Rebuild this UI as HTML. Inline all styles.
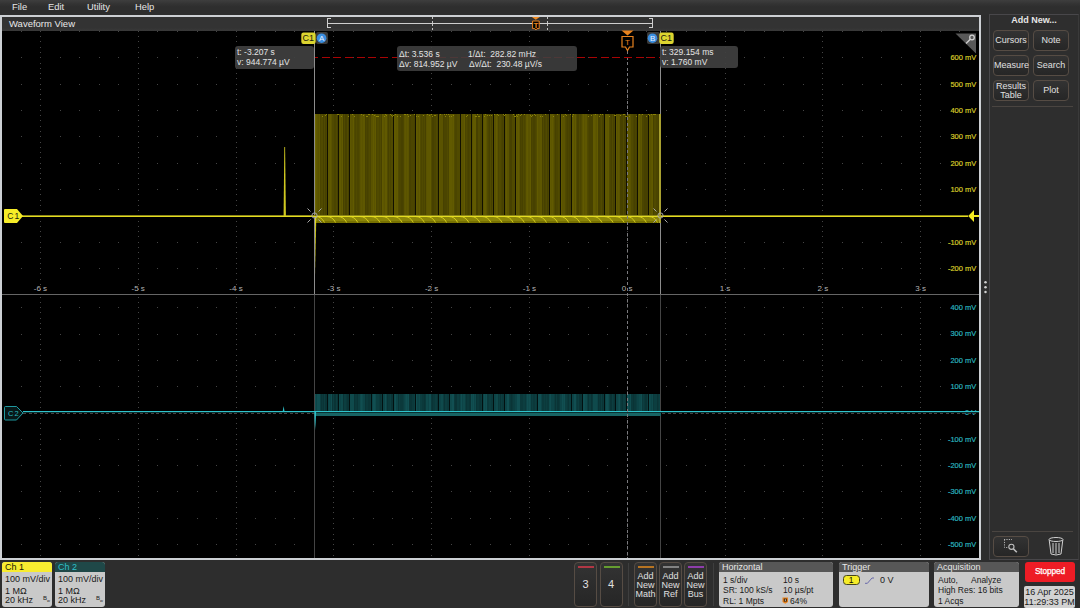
<!DOCTYPE html><html><head><meta charset="utf-8"><style>
*{margin:0;padding:0;box-sizing:border-box}
html,body{width:1080px;height:608px;overflow:hidden;background:#2d2d2d;font-family:"Liberation Sans", sans-serif;}
.a{position:absolute;white-space:nowrap}
.menu{color:#e6e6e6;font-size:9.4px;top:-0.3px;}
.btn{position:absolute;background:linear-gradient(#333,#262626);border:1px solid #564c44;border-radius:4px;color:#e0e0e0;font-size:9px;text-align:center;}
.box{position:absolute;background:#c9c9c9;border-radius:2px;overflow:hidden}
.hdr{position:absolute;left:0;right:0;top:0;height:10px;background:#575757;color:#e8e8e8;font-size:9px;padding-left:3px;line-height:10px}
.bt{position:absolute;color:#1a1a1a;font-size:9px;line-height:10px}
.ro{position:absolute;background:rgba(64,64,64,0.92);border-radius:3px;color:#e4e4e4;font-size:8.5px;line-height:9.5px}
</style></head><body>

<div class="a" style="left:0;top:0;width:1080px;height:15px;background:linear-gradient(#3e3e3e 0px,#333 4px,#2e2e2e 7px,#2e2e2e 15px)"></div>
<div class="a menu" style="left:12px;line-height:13px">File</div>
<div class="a menu" style="left:48px;line-height:13px">Edit</div>
<div class="a menu" style="left:87px;line-height:13px">Utility</div>
<div class="a menu" style="left:135px;line-height:13px">Help</div>
<div class="a" style="left:0;top:15px;width:981px;height:545px;border:2px solid #cdd0d4;background:#000"></div>
<div class="a" style="left:2px;top:17px;width:977px;height:14px;background:linear-gradient(#333 0,#333 11px,#3a3a3a 14px)"></div>
<div class="a" style="left:9px;top:17px;color:#e8e8e8;font-size:9.5px;line-height:14px">Waveform View</div>
<svg class="a" style="left:0;top:0" width="1080" height="608" viewBox="0 0 1080 608" shape-rendering="crispEdges">
<g stroke="#cfcfcf" fill="none" stroke-width="1">
<path d="M331,18.5 H327.5 V27.5 H331"/><path d="M649,18.5 H652.5 V27.5 H649"/>
<line x1="328" y1="23.5" x2="652" y2="23.5"/>
</g>
<g stroke="#c4c4c4" stroke-width="1" stroke-dasharray="2,1.5"><line x1="432.5" y1="17" x2="432.5" y2="30"/><line x1="547.5" y1="17" x2="547.5" y2="30"/></g>
<g shape-rendering="geometricPrecision"><path d="M531.8,17 H539.8 L535.8,19.8 Z" fill="#f08a20"/><path d="M532.6,21 H539.2 V28.6 H537 L535.9,30 L534.8,28.6 H532.6 Z" fill="#000" stroke="#e8821e" stroke-width="1"/></g>
<text x="535.9" y="27.8" font-size="8" font-weight="bold" fill="#e8821e" text-anchor="middle" font-family="Liberation Sans">T</text>
<g fill="#454545" shape-rendering="crispEdges">
<rect x="21" y="31" width="1" height="1"/>
<rect x="40" y="31" width="1" height="1"/>
<rect x="60" y="31" width="1" height="1"/>
<rect x="79" y="31" width="1" height="1"/>
<rect x="99" y="31" width="1" height="1"/>
<rect x="118" y="31" width="1" height="1"/>
<rect x="138" y="31" width="1" height="1"/>
<rect x="157" y="31" width="1" height="1"/>
<rect x="177" y="31" width="1" height="1"/>
<rect x="197" y="31" width="1" height="1"/>
<rect x="216" y="31" width="1" height="1"/>
<rect x="236" y="31" width="1" height="1"/>
<rect x="255" y="31" width="1" height="1"/>
<rect x="275" y="31" width="1" height="1"/>
<rect x="294" y="31" width="1" height="1"/>
<rect x="314" y="31" width="1" height="1"/>
<rect x="333" y="31" width="1" height="1"/>
<rect x="353" y="31" width="1" height="1"/>
<rect x="373" y="31" width="1" height="1"/>
<rect x="392" y="31" width="1" height="1"/>
<rect x="412" y="31" width="1" height="1"/>
<rect x="431" y="31" width="1" height="1"/>
<rect x="451" y="31" width="1" height="1"/>
<rect x="470" y="31" width="1" height="1"/>
<rect x="490" y="31" width="1" height="1"/>
<rect x="510" y="31" width="1" height="1"/>
<rect x="529" y="31" width="1" height="1"/>
<rect x="549" y="31" width="1" height="1"/>
<rect x="568" y="31" width="1" height="1"/>
<rect x="588" y="31" width="1" height="1"/>
<rect x="607" y="31" width="1" height="1"/>
<rect x="627" y="31" width="1" height="1"/>
<rect x="646" y="31" width="1" height="1"/>
<rect x="666" y="31" width="1" height="1"/>
<rect x="686" y="31" width="1" height="1"/>
<rect x="705" y="31" width="1" height="1"/>
<rect x="725" y="31" width="1" height="1"/>
<rect x="744" y="31" width="1" height="1"/>
<rect x="764" y="31" width="1" height="1"/>
<rect x="783" y="31" width="1" height="1"/>
<rect x="803" y="31" width="1" height="1"/>
<rect x="822" y="31" width="1" height="1"/>
<rect x="842" y="31" width="1" height="1"/>
<rect x="862" y="31" width="1" height="1"/>
<rect x="881" y="31" width="1" height="1"/>
<rect x="901" y="31" width="1" height="1"/>
<rect x="920" y="31" width="1" height="1"/>
<rect x="940" y="31" width="1" height="1"/>
<rect x="959" y="31" width="1" height="1"/>
<rect x="21" y="57" width="1" height="1"/>
<rect x="40" y="57" width="1" height="1"/>
<rect x="60" y="57" width="1" height="1"/>
<rect x="79" y="57" width="1" height="1"/>
<rect x="99" y="57" width="1" height="1"/>
<rect x="118" y="57" width="1" height="1"/>
<rect x="138" y="57" width="1" height="1"/>
<rect x="157" y="57" width="1" height="1"/>
<rect x="177" y="57" width="1" height="1"/>
<rect x="197" y="57" width="1" height="1"/>
<rect x="216" y="57" width="1" height="1"/>
<rect x="236" y="57" width="1" height="1"/>
<rect x="255" y="57" width="1" height="1"/>
<rect x="275" y="57" width="1" height="1"/>
<rect x="294" y="57" width="1" height="1"/>
<rect x="314" y="57" width="1" height="1"/>
<rect x="333" y="57" width="1" height="1"/>
<rect x="353" y="57" width="1" height="1"/>
<rect x="373" y="57" width="1" height="1"/>
<rect x="392" y="57" width="1" height="1"/>
<rect x="412" y="57" width="1" height="1"/>
<rect x="431" y="57" width="1" height="1"/>
<rect x="451" y="57" width="1" height="1"/>
<rect x="470" y="57" width="1" height="1"/>
<rect x="490" y="57" width="1" height="1"/>
<rect x="510" y="57" width="1" height="1"/>
<rect x="529" y="57" width="1" height="1"/>
<rect x="549" y="57" width="1" height="1"/>
<rect x="568" y="57" width="1" height="1"/>
<rect x="588" y="57" width="1" height="1"/>
<rect x="607" y="57" width="1" height="1"/>
<rect x="627" y="57" width="1" height="1"/>
<rect x="646" y="57" width="1" height="1"/>
<rect x="666" y="57" width="1" height="1"/>
<rect x="686" y="57" width="1" height="1"/>
<rect x="705" y="57" width="1" height="1"/>
<rect x="725" y="57" width="1" height="1"/>
<rect x="744" y="57" width="1" height="1"/>
<rect x="764" y="57" width="1" height="1"/>
<rect x="783" y="57" width="1" height="1"/>
<rect x="803" y="57" width="1" height="1"/>
<rect x="822" y="57" width="1" height="1"/>
<rect x="842" y="57" width="1" height="1"/>
<rect x="862" y="57" width="1" height="1"/>
<rect x="881" y="57" width="1" height="1"/>
<rect x="901" y="57" width="1" height="1"/>
<rect x="920" y="57" width="1" height="1"/>
<rect x="940" y="57" width="1" height="1"/>
<rect x="959" y="57" width="1" height="1"/>
<rect x="21" y="84" width="1" height="1"/>
<rect x="40" y="84" width="1" height="1"/>
<rect x="60" y="84" width="1" height="1"/>
<rect x="79" y="84" width="1" height="1"/>
<rect x="99" y="84" width="1" height="1"/>
<rect x="118" y="84" width="1" height="1"/>
<rect x="138" y="84" width="1" height="1"/>
<rect x="157" y="84" width="1" height="1"/>
<rect x="177" y="84" width="1" height="1"/>
<rect x="197" y="84" width="1" height="1"/>
<rect x="216" y="84" width="1" height="1"/>
<rect x="236" y="84" width="1" height="1"/>
<rect x="255" y="84" width="1" height="1"/>
<rect x="275" y="84" width="1" height="1"/>
<rect x="294" y="84" width="1" height="1"/>
<rect x="314" y="84" width="1" height="1"/>
<rect x="333" y="84" width="1" height="1"/>
<rect x="353" y="84" width="1" height="1"/>
<rect x="373" y="84" width="1" height="1"/>
<rect x="392" y="84" width="1" height="1"/>
<rect x="412" y="84" width="1" height="1"/>
<rect x="431" y="84" width="1" height="1"/>
<rect x="451" y="84" width="1" height="1"/>
<rect x="470" y="84" width="1" height="1"/>
<rect x="490" y="84" width="1" height="1"/>
<rect x="510" y="84" width="1" height="1"/>
<rect x="529" y="84" width="1" height="1"/>
<rect x="549" y="84" width="1" height="1"/>
<rect x="568" y="84" width="1" height="1"/>
<rect x="588" y="84" width="1" height="1"/>
<rect x="607" y="84" width="1" height="1"/>
<rect x="627" y="84" width="1" height="1"/>
<rect x="646" y="84" width="1" height="1"/>
<rect x="666" y="84" width="1" height="1"/>
<rect x="686" y="84" width="1" height="1"/>
<rect x="705" y="84" width="1" height="1"/>
<rect x="725" y="84" width="1" height="1"/>
<rect x="744" y="84" width="1" height="1"/>
<rect x="764" y="84" width="1" height="1"/>
<rect x="783" y="84" width="1" height="1"/>
<rect x="803" y="84" width="1" height="1"/>
<rect x="822" y="84" width="1" height="1"/>
<rect x="842" y="84" width="1" height="1"/>
<rect x="862" y="84" width="1" height="1"/>
<rect x="881" y="84" width="1" height="1"/>
<rect x="901" y="84" width="1" height="1"/>
<rect x="920" y="84" width="1" height="1"/>
<rect x="940" y="84" width="1" height="1"/>
<rect x="959" y="84" width="1" height="1"/>
<rect x="21" y="110" width="1" height="1"/>
<rect x="40" y="110" width="1" height="1"/>
<rect x="60" y="110" width="1" height="1"/>
<rect x="79" y="110" width="1" height="1"/>
<rect x="99" y="110" width="1" height="1"/>
<rect x="118" y="110" width="1" height="1"/>
<rect x="138" y="110" width="1" height="1"/>
<rect x="157" y="110" width="1" height="1"/>
<rect x="177" y="110" width="1" height="1"/>
<rect x="197" y="110" width="1" height="1"/>
<rect x="216" y="110" width="1" height="1"/>
<rect x="236" y="110" width="1" height="1"/>
<rect x="255" y="110" width="1" height="1"/>
<rect x="275" y="110" width="1" height="1"/>
<rect x="294" y="110" width="1" height="1"/>
<rect x="314" y="110" width="1" height="1"/>
<rect x="333" y="110" width="1" height="1"/>
<rect x="353" y="110" width="1" height="1"/>
<rect x="373" y="110" width="1" height="1"/>
<rect x="392" y="110" width="1" height="1"/>
<rect x="412" y="110" width="1" height="1"/>
<rect x="431" y="110" width="1" height="1"/>
<rect x="451" y="110" width="1" height="1"/>
<rect x="470" y="110" width="1" height="1"/>
<rect x="490" y="110" width="1" height="1"/>
<rect x="510" y="110" width="1" height="1"/>
<rect x="529" y="110" width="1" height="1"/>
<rect x="549" y="110" width="1" height="1"/>
<rect x="568" y="110" width="1" height="1"/>
<rect x="588" y="110" width="1" height="1"/>
<rect x="607" y="110" width="1" height="1"/>
<rect x="627" y="110" width="1" height="1"/>
<rect x="646" y="110" width="1" height="1"/>
<rect x="666" y="110" width="1" height="1"/>
<rect x="686" y="110" width="1" height="1"/>
<rect x="705" y="110" width="1" height="1"/>
<rect x="725" y="110" width="1" height="1"/>
<rect x="744" y="110" width="1" height="1"/>
<rect x="764" y="110" width="1" height="1"/>
<rect x="783" y="110" width="1" height="1"/>
<rect x="803" y="110" width="1" height="1"/>
<rect x="822" y="110" width="1" height="1"/>
<rect x="842" y="110" width="1" height="1"/>
<rect x="862" y="110" width="1" height="1"/>
<rect x="881" y="110" width="1" height="1"/>
<rect x="901" y="110" width="1" height="1"/>
<rect x="920" y="110" width="1" height="1"/>
<rect x="940" y="110" width="1" height="1"/>
<rect x="959" y="110" width="1" height="1"/>
<rect x="21" y="136" width="1" height="1"/>
<rect x="40" y="136" width="1" height="1"/>
<rect x="60" y="136" width="1" height="1"/>
<rect x="79" y="136" width="1" height="1"/>
<rect x="99" y="136" width="1" height="1"/>
<rect x="118" y="136" width="1" height="1"/>
<rect x="138" y="136" width="1" height="1"/>
<rect x="157" y="136" width="1" height="1"/>
<rect x="177" y="136" width="1" height="1"/>
<rect x="197" y="136" width="1" height="1"/>
<rect x="216" y="136" width="1" height="1"/>
<rect x="236" y="136" width="1" height="1"/>
<rect x="255" y="136" width="1" height="1"/>
<rect x="275" y="136" width="1" height="1"/>
<rect x="294" y="136" width="1" height="1"/>
<rect x="314" y="136" width="1" height="1"/>
<rect x="333" y="136" width="1" height="1"/>
<rect x="353" y="136" width="1" height="1"/>
<rect x="373" y="136" width="1" height="1"/>
<rect x="392" y="136" width="1" height="1"/>
<rect x="412" y="136" width="1" height="1"/>
<rect x="431" y="136" width="1" height="1"/>
<rect x="451" y="136" width="1" height="1"/>
<rect x="470" y="136" width="1" height="1"/>
<rect x="490" y="136" width="1" height="1"/>
<rect x="510" y="136" width="1" height="1"/>
<rect x="529" y="136" width="1" height="1"/>
<rect x="549" y="136" width="1" height="1"/>
<rect x="568" y="136" width="1" height="1"/>
<rect x="588" y="136" width="1" height="1"/>
<rect x="607" y="136" width="1" height="1"/>
<rect x="627" y="136" width="1" height="1"/>
<rect x="646" y="136" width="1" height="1"/>
<rect x="666" y="136" width="1" height="1"/>
<rect x="686" y="136" width="1" height="1"/>
<rect x="705" y="136" width="1" height="1"/>
<rect x="725" y="136" width="1" height="1"/>
<rect x="744" y="136" width="1" height="1"/>
<rect x="764" y="136" width="1" height="1"/>
<rect x="783" y="136" width="1" height="1"/>
<rect x="803" y="136" width="1" height="1"/>
<rect x="822" y="136" width="1" height="1"/>
<rect x="842" y="136" width="1" height="1"/>
<rect x="862" y="136" width="1" height="1"/>
<rect x="881" y="136" width="1" height="1"/>
<rect x="901" y="136" width="1" height="1"/>
<rect x="920" y="136" width="1" height="1"/>
<rect x="940" y="136" width="1" height="1"/>
<rect x="959" y="136" width="1" height="1"/>
<rect x="21" y="163" width="1" height="1"/>
<rect x="40" y="163" width="1" height="1"/>
<rect x="60" y="163" width="1" height="1"/>
<rect x="79" y="163" width="1" height="1"/>
<rect x="99" y="163" width="1" height="1"/>
<rect x="118" y="163" width="1" height="1"/>
<rect x="138" y="163" width="1" height="1"/>
<rect x="157" y="163" width="1" height="1"/>
<rect x="177" y="163" width="1" height="1"/>
<rect x="197" y="163" width="1" height="1"/>
<rect x="216" y="163" width="1" height="1"/>
<rect x="236" y="163" width="1" height="1"/>
<rect x="255" y="163" width="1" height="1"/>
<rect x="275" y="163" width="1" height="1"/>
<rect x="294" y="163" width="1" height="1"/>
<rect x="314" y="163" width="1" height="1"/>
<rect x="333" y="163" width="1" height="1"/>
<rect x="353" y="163" width="1" height="1"/>
<rect x="373" y="163" width="1" height="1"/>
<rect x="392" y="163" width="1" height="1"/>
<rect x="412" y="163" width="1" height="1"/>
<rect x="431" y="163" width="1" height="1"/>
<rect x="451" y="163" width="1" height="1"/>
<rect x="470" y="163" width="1" height="1"/>
<rect x="490" y="163" width="1" height="1"/>
<rect x="510" y="163" width="1" height="1"/>
<rect x="529" y="163" width="1" height="1"/>
<rect x="549" y="163" width="1" height="1"/>
<rect x="568" y="163" width="1" height="1"/>
<rect x="588" y="163" width="1" height="1"/>
<rect x="607" y="163" width="1" height="1"/>
<rect x="627" y="163" width="1" height="1"/>
<rect x="646" y="163" width="1" height="1"/>
<rect x="666" y="163" width="1" height="1"/>
<rect x="686" y="163" width="1" height="1"/>
<rect x="705" y="163" width="1" height="1"/>
<rect x="725" y="163" width="1" height="1"/>
<rect x="744" y="163" width="1" height="1"/>
<rect x="764" y="163" width="1" height="1"/>
<rect x="783" y="163" width="1" height="1"/>
<rect x="803" y="163" width="1" height="1"/>
<rect x="822" y="163" width="1" height="1"/>
<rect x="842" y="163" width="1" height="1"/>
<rect x="862" y="163" width="1" height="1"/>
<rect x="881" y="163" width="1" height="1"/>
<rect x="901" y="163" width="1" height="1"/>
<rect x="920" y="163" width="1" height="1"/>
<rect x="940" y="163" width="1" height="1"/>
<rect x="959" y="163" width="1" height="1"/>
<rect x="21" y="189" width="1" height="1"/>
<rect x="40" y="189" width="1" height="1"/>
<rect x="60" y="189" width="1" height="1"/>
<rect x="79" y="189" width="1" height="1"/>
<rect x="99" y="189" width="1" height="1"/>
<rect x="118" y="189" width="1" height="1"/>
<rect x="138" y="189" width="1" height="1"/>
<rect x="157" y="189" width="1" height="1"/>
<rect x="177" y="189" width="1" height="1"/>
<rect x="197" y="189" width="1" height="1"/>
<rect x="216" y="189" width="1" height="1"/>
<rect x="236" y="189" width="1" height="1"/>
<rect x="255" y="189" width="1" height="1"/>
<rect x="275" y="189" width="1" height="1"/>
<rect x="294" y="189" width="1" height="1"/>
<rect x="314" y="189" width="1" height="1"/>
<rect x="333" y="189" width="1" height="1"/>
<rect x="353" y="189" width="1" height="1"/>
<rect x="373" y="189" width="1" height="1"/>
<rect x="392" y="189" width="1" height="1"/>
<rect x="412" y="189" width="1" height="1"/>
<rect x="431" y="189" width="1" height="1"/>
<rect x="451" y="189" width="1" height="1"/>
<rect x="470" y="189" width="1" height="1"/>
<rect x="490" y="189" width="1" height="1"/>
<rect x="510" y="189" width="1" height="1"/>
<rect x="529" y="189" width="1" height="1"/>
<rect x="549" y="189" width="1" height="1"/>
<rect x="568" y="189" width="1" height="1"/>
<rect x="588" y="189" width="1" height="1"/>
<rect x="607" y="189" width="1" height="1"/>
<rect x="627" y="189" width="1" height="1"/>
<rect x="646" y="189" width="1" height="1"/>
<rect x="666" y="189" width="1" height="1"/>
<rect x="686" y="189" width="1" height="1"/>
<rect x="705" y="189" width="1" height="1"/>
<rect x="725" y="189" width="1" height="1"/>
<rect x="744" y="189" width="1" height="1"/>
<rect x="764" y="189" width="1" height="1"/>
<rect x="783" y="189" width="1" height="1"/>
<rect x="803" y="189" width="1" height="1"/>
<rect x="822" y="189" width="1" height="1"/>
<rect x="842" y="189" width="1" height="1"/>
<rect x="862" y="189" width="1" height="1"/>
<rect x="881" y="189" width="1" height="1"/>
<rect x="901" y="189" width="1" height="1"/>
<rect x="920" y="189" width="1" height="1"/>
<rect x="940" y="189" width="1" height="1"/>
<rect x="959" y="189" width="1" height="1"/>
<rect x="21" y="215" width="1" height="1"/>
<rect x="40" y="215" width="1" height="1"/>
<rect x="60" y="215" width="1" height="1"/>
<rect x="79" y="215" width="1" height="1"/>
<rect x="99" y="215" width="1" height="1"/>
<rect x="118" y="215" width="1" height="1"/>
<rect x="138" y="215" width="1" height="1"/>
<rect x="157" y="215" width="1" height="1"/>
<rect x="177" y="215" width="1" height="1"/>
<rect x="197" y="215" width="1" height="1"/>
<rect x="216" y="215" width="1" height="1"/>
<rect x="236" y="215" width="1" height="1"/>
<rect x="255" y="215" width="1" height="1"/>
<rect x="275" y="215" width="1" height="1"/>
<rect x="294" y="215" width="1" height="1"/>
<rect x="314" y="215" width="1" height="1"/>
<rect x="333" y="215" width="1" height="1"/>
<rect x="353" y="215" width="1" height="1"/>
<rect x="373" y="215" width="1" height="1"/>
<rect x="392" y="215" width="1" height="1"/>
<rect x="412" y="215" width="1" height="1"/>
<rect x="431" y="215" width="1" height="1"/>
<rect x="451" y="215" width="1" height="1"/>
<rect x="470" y="215" width="1" height="1"/>
<rect x="490" y="215" width="1" height="1"/>
<rect x="510" y="215" width="1" height="1"/>
<rect x="529" y="215" width="1" height="1"/>
<rect x="549" y="215" width="1" height="1"/>
<rect x="568" y="215" width="1" height="1"/>
<rect x="588" y="215" width="1" height="1"/>
<rect x="607" y="215" width="1" height="1"/>
<rect x="627" y="215" width="1" height="1"/>
<rect x="646" y="215" width="1" height="1"/>
<rect x="666" y="215" width="1" height="1"/>
<rect x="686" y="215" width="1" height="1"/>
<rect x="705" y="215" width="1" height="1"/>
<rect x="725" y="215" width="1" height="1"/>
<rect x="744" y="215" width="1" height="1"/>
<rect x="764" y="215" width="1" height="1"/>
<rect x="783" y="215" width="1" height="1"/>
<rect x="803" y="215" width="1" height="1"/>
<rect x="822" y="215" width="1" height="1"/>
<rect x="842" y="215" width="1" height="1"/>
<rect x="862" y="215" width="1" height="1"/>
<rect x="881" y="215" width="1" height="1"/>
<rect x="901" y="215" width="1" height="1"/>
<rect x="920" y="215" width="1" height="1"/>
<rect x="940" y="215" width="1" height="1"/>
<rect x="959" y="215" width="1" height="1"/>
<rect x="21" y="242" width="1" height="1"/>
<rect x="40" y="242" width="1" height="1"/>
<rect x="60" y="242" width="1" height="1"/>
<rect x="79" y="242" width="1" height="1"/>
<rect x="99" y="242" width="1" height="1"/>
<rect x="118" y="242" width="1" height="1"/>
<rect x="138" y="242" width="1" height="1"/>
<rect x="157" y="242" width="1" height="1"/>
<rect x="177" y="242" width="1" height="1"/>
<rect x="197" y="242" width="1" height="1"/>
<rect x="216" y="242" width="1" height="1"/>
<rect x="236" y="242" width="1" height="1"/>
<rect x="255" y="242" width="1" height="1"/>
<rect x="275" y="242" width="1" height="1"/>
<rect x="294" y="242" width="1" height="1"/>
<rect x="314" y="242" width="1" height="1"/>
<rect x="333" y="242" width="1" height="1"/>
<rect x="353" y="242" width="1" height="1"/>
<rect x="373" y="242" width="1" height="1"/>
<rect x="392" y="242" width="1" height="1"/>
<rect x="412" y="242" width="1" height="1"/>
<rect x="431" y="242" width="1" height="1"/>
<rect x="451" y="242" width="1" height="1"/>
<rect x="470" y="242" width="1" height="1"/>
<rect x="490" y="242" width="1" height="1"/>
<rect x="510" y="242" width="1" height="1"/>
<rect x="529" y="242" width="1" height="1"/>
<rect x="549" y="242" width="1" height="1"/>
<rect x="568" y="242" width="1" height="1"/>
<rect x="588" y="242" width="1" height="1"/>
<rect x="607" y="242" width="1" height="1"/>
<rect x="627" y="242" width="1" height="1"/>
<rect x="646" y="242" width="1" height="1"/>
<rect x="666" y="242" width="1" height="1"/>
<rect x="686" y="242" width="1" height="1"/>
<rect x="705" y="242" width="1" height="1"/>
<rect x="725" y="242" width="1" height="1"/>
<rect x="744" y="242" width="1" height="1"/>
<rect x="764" y="242" width="1" height="1"/>
<rect x="783" y="242" width="1" height="1"/>
<rect x="803" y="242" width="1" height="1"/>
<rect x="822" y="242" width="1" height="1"/>
<rect x="842" y="242" width="1" height="1"/>
<rect x="862" y="242" width="1" height="1"/>
<rect x="881" y="242" width="1" height="1"/>
<rect x="901" y="242" width="1" height="1"/>
<rect x="920" y="242" width="1" height="1"/>
<rect x="940" y="242" width="1" height="1"/>
<rect x="959" y="242" width="1" height="1"/>
<rect x="21" y="268" width="1" height="1"/>
<rect x="40" y="268" width="1" height="1"/>
<rect x="60" y="268" width="1" height="1"/>
<rect x="79" y="268" width="1" height="1"/>
<rect x="99" y="268" width="1" height="1"/>
<rect x="118" y="268" width="1" height="1"/>
<rect x="138" y="268" width="1" height="1"/>
<rect x="157" y="268" width="1" height="1"/>
<rect x="177" y="268" width="1" height="1"/>
<rect x="197" y="268" width="1" height="1"/>
<rect x="216" y="268" width="1" height="1"/>
<rect x="236" y="268" width="1" height="1"/>
<rect x="255" y="268" width="1" height="1"/>
<rect x="275" y="268" width="1" height="1"/>
<rect x="294" y="268" width="1" height="1"/>
<rect x="314" y="268" width="1" height="1"/>
<rect x="333" y="268" width="1" height="1"/>
<rect x="353" y="268" width="1" height="1"/>
<rect x="373" y="268" width="1" height="1"/>
<rect x="392" y="268" width="1" height="1"/>
<rect x="412" y="268" width="1" height="1"/>
<rect x="431" y="268" width="1" height="1"/>
<rect x="451" y="268" width="1" height="1"/>
<rect x="470" y="268" width="1" height="1"/>
<rect x="490" y="268" width="1" height="1"/>
<rect x="510" y="268" width="1" height="1"/>
<rect x="529" y="268" width="1" height="1"/>
<rect x="549" y="268" width="1" height="1"/>
<rect x="568" y="268" width="1" height="1"/>
<rect x="588" y="268" width="1" height="1"/>
<rect x="607" y="268" width="1" height="1"/>
<rect x="627" y="268" width="1" height="1"/>
<rect x="646" y="268" width="1" height="1"/>
<rect x="666" y="268" width="1" height="1"/>
<rect x="686" y="268" width="1" height="1"/>
<rect x="705" y="268" width="1" height="1"/>
<rect x="725" y="268" width="1" height="1"/>
<rect x="744" y="268" width="1" height="1"/>
<rect x="764" y="268" width="1" height="1"/>
<rect x="783" y="268" width="1" height="1"/>
<rect x="803" y="268" width="1" height="1"/>
<rect x="822" y="268" width="1" height="1"/>
<rect x="842" y="268" width="1" height="1"/>
<rect x="862" y="268" width="1" height="1"/>
<rect x="881" y="268" width="1" height="1"/>
<rect x="901" y="268" width="1" height="1"/>
<rect x="920" y="268" width="1" height="1"/>
<rect x="940" y="268" width="1" height="1"/>
<rect x="959" y="268" width="1" height="1"/>
<rect x="21" y="307" width="1" height="1"/>
<rect x="40" y="307" width="1" height="1"/>
<rect x="60" y="307" width="1" height="1"/>
<rect x="79" y="307" width="1" height="1"/>
<rect x="99" y="307" width="1" height="1"/>
<rect x="118" y="307" width="1" height="1"/>
<rect x="138" y="307" width="1" height="1"/>
<rect x="157" y="307" width="1" height="1"/>
<rect x="177" y="307" width="1" height="1"/>
<rect x="197" y="307" width="1" height="1"/>
<rect x="216" y="307" width="1" height="1"/>
<rect x="236" y="307" width="1" height="1"/>
<rect x="255" y="307" width="1" height="1"/>
<rect x="275" y="307" width="1" height="1"/>
<rect x="294" y="307" width="1" height="1"/>
<rect x="314" y="307" width="1" height="1"/>
<rect x="333" y="307" width="1" height="1"/>
<rect x="353" y="307" width="1" height="1"/>
<rect x="373" y="307" width="1" height="1"/>
<rect x="392" y="307" width="1" height="1"/>
<rect x="412" y="307" width="1" height="1"/>
<rect x="431" y="307" width="1" height="1"/>
<rect x="451" y="307" width="1" height="1"/>
<rect x="470" y="307" width="1" height="1"/>
<rect x="490" y="307" width="1" height="1"/>
<rect x="510" y="307" width="1" height="1"/>
<rect x="529" y="307" width="1" height="1"/>
<rect x="549" y="307" width="1" height="1"/>
<rect x="568" y="307" width="1" height="1"/>
<rect x="588" y="307" width="1" height="1"/>
<rect x="607" y="307" width="1" height="1"/>
<rect x="627" y="307" width="1" height="1"/>
<rect x="646" y="307" width="1" height="1"/>
<rect x="666" y="307" width="1" height="1"/>
<rect x="686" y="307" width="1" height="1"/>
<rect x="705" y="307" width="1" height="1"/>
<rect x="725" y="307" width="1" height="1"/>
<rect x="744" y="307" width="1" height="1"/>
<rect x="764" y="307" width="1" height="1"/>
<rect x="783" y="307" width="1" height="1"/>
<rect x="803" y="307" width="1" height="1"/>
<rect x="822" y="307" width="1" height="1"/>
<rect x="842" y="307" width="1" height="1"/>
<rect x="862" y="307" width="1" height="1"/>
<rect x="881" y="307" width="1" height="1"/>
<rect x="901" y="307" width="1" height="1"/>
<rect x="920" y="307" width="1" height="1"/>
<rect x="940" y="307" width="1" height="1"/>
<rect x="959" y="307" width="1" height="1"/>
<rect x="21" y="334" width="1" height="1"/>
<rect x="40" y="334" width="1" height="1"/>
<rect x="60" y="334" width="1" height="1"/>
<rect x="79" y="334" width="1" height="1"/>
<rect x="99" y="334" width="1" height="1"/>
<rect x="118" y="334" width="1" height="1"/>
<rect x="138" y="334" width="1" height="1"/>
<rect x="157" y="334" width="1" height="1"/>
<rect x="177" y="334" width="1" height="1"/>
<rect x="197" y="334" width="1" height="1"/>
<rect x="216" y="334" width="1" height="1"/>
<rect x="236" y="334" width="1" height="1"/>
<rect x="255" y="334" width="1" height="1"/>
<rect x="275" y="334" width="1" height="1"/>
<rect x="294" y="334" width="1" height="1"/>
<rect x="314" y="334" width="1" height="1"/>
<rect x="333" y="334" width="1" height="1"/>
<rect x="353" y="334" width="1" height="1"/>
<rect x="373" y="334" width="1" height="1"/>
<rect x="392" y="334" width="1" height="1"/>
<rect x="412" y="334" width="1" height="1"/>
<rect x="431" y="334" width="1" height="1"/>
<rect x="451" y="334" width="1" height="1"/>
<rect x="470" y="334" width="1" height="1"/>
<rect x="490" y="334" width="1" height="1"/>
<rect x="510" y="334" width="1" height="1"/>
<rect x="529" y="334" width="1" height="1"/>
<rect x="549" y="334" width="1" height="1"/>
<rect x="568" y="334" width="1" height="1"/>
<rect x="588" y="334" width="1" height="1"/>
<rect x="607" y="334" width="1" height="1"/>
<rect x="627" y="334" width="1" height="1"/>
<rect x="646" y="334" width="1" height="1"/>
<rect x="666" y="334" width="1" height="1"/>
<rect x="686" y="334" width="1" height="1"/>
<rect x="705" y="334" width="1" height="1"/>
<rect x="725" y="334" width="1" height="1"/>
<rect x="744" y="334" width="1" height="1"/>
<rect x="764" y="334" width="1" height="1"/>
<rect x="783" y="334" width="1" height="1"/>
<rect x="803" y="334" width="1" height="1"/>
<rect x="822" y="334" width="1" height="1"/>
<rect x="842" y="334" width="1" height="1"/>
<rect x="862" y="334" width="1" height="1"/>
<rect x="881" y="334" width="1" height="1"/>
<rect x="901" y="334" width="1" height="1"/>
<rect x="920" y="334" width="1" height="1"/>
<rect x="940" y="334" width="1" height="1"/>
<rect x="959" y="334" width="1" height="1"/>
<rect x="21" y="360" width="1" height="1"/>
<rect x="40" y="360" width="1" height="1"/>
<rect x="60" y="360" width="1" height="1"/>
<rect x="79" y="360" width="1" height="1"/>
<rect x="99" y="360" width="1" height="1"/>
<rect x="118" y="360" width="1" height="1"/>
<rect x="138" y="360" width="1" height="1"/>
<rect x="157" y="360" width="1" height="1"/>
<rect x="177" y="360" width="1" height="1"/>
<rect x="197" y="360" width="1" height="1"/>
<rect x="216" y="360" width="1" height="1"/>
<rect x="236" y="360" width="1" height="1"/>
<rect x="255" y="360" width="1" height="1"/>
<rect x="275" y="360" width="1" height="1"/>
<rect x="294" y="360" width="1" height="1"/>
<rect x="314" y="360" width="1" height="1"/>
<rect x="333" y="360" width="1" height="1"/>
<rect x="353" y="360" width="1" height="1"/>
<rect x="373" y="360" width="1" height="1"/>
<rect x="392" y="360" width="1" height="1"/>
<rect x="412" y="360" width="1" height="1"/>
<rect x="431" y="360" width="1" height="1"/>
<rect x="451" y="360" width="1" height="1"/>
<rect x="470" y="360" width="1" height="1"/>
<rect x="490" y="360" width="1" height="1"/>
<rect x="510" y="360" width="1" height="1"/>
<rect x="529" y="360" width="1" height="1"/>
<rect x="549" y="360" width="1" height="1"/>
<rect x="568" y="360" width="1" height="1"/>
<rect x="588" y="360" width="1" height="1"/>
<rect x="607" y="360" width="1" height="1"/>
<rect x="627" y="360" width="1" height="1"/>
<rect x="646" y="360" width="1" height="1"/>
<rect x="666" y="360" width="1" height="1"/>
<rect x="686" y="360" width="1" height="1"/>
<rect x="705" y="360" width="1" height="1"/>
<rect x="725" y="360" width="1" height="1"/>
<rect x="744" y="360" width="1" height="1"/>
<rect x="764" y="360" width="1" height="1"/>
<rect x="783" y="360" width="1" height="1"/>
<rect x="803" y="360" width="1" height="1"/>
<rect x="822" y="360" width="1" height="1"/>
<rect x="842" y="360" width="1" height="1"/>
<rect x="862" y="360" width="1" height="1"/>
<rect x="881" y="360" width="1" height="1"/>
<rect x="901" y="360" width="1" height="1"/>
<rect x="920" y="360" width="1" height="1"/>
<rect x="940" y="360" width="1" height="1"/>
<rect x="959" y="360" width="1" height="1"/>
<rect x="21" y="386" width="1" height="1"/>
<rect x="40" y="386" width="1" height="1"/>
<rect x="60" y="386" width="1" height="1"/>
<rect x="79" y="386" width="1" height="1"/>
<rect x="99" y="386" width="1" height="1"/>
<rect x="118" y="386" width="1" height="1"/>
<rect x="138" y="386" width="1" height="1"/>
<rect x="157" y="386" width="1" height="1"/>
<rect x="177" y="386" width="1" height="1"/>
<rect x="197" y="386" width="1" height="1"/>
<rect x="216" y="386" width="1" height="1"/>
<rect x="236" y="386" width="1" height="1"/>
<rect x="255" y="386" width="1" height="1"/>
<rect x="275" y="386" width="1" height="1"/>
<rect x="294" y="386" width="1" height="1"/>
<rect x="314" y="386" width="1" height="1"/>
<rect x="333" y="386" width="1" height="1"/>
<rect x="353" y="386" width="1" height="1"/>
<rect x="373" y="386" width="1" height="1"/>
<rect x="392" y="386" width="1" height="1"/>
<rect x="412" y="386" width="1" height="1"/>
<rect x="431" y="386" width="1" height="1"/>
<rect x="451" y="386" width="1" height="1"/>
<rect x="470" y="386" width="1" height="1"/>
<rect x="490" y="386" width="1" height="1"/>
<rect x="510" y="386" width="1" height="1"/>
<rect x="529" y="386" width="1" height="1"/>
<rect x="549" y="386" width="1" height="1"/>
<rect x="568" y="386" width="1" height="1"/>
<rect x="588" y="386" width="1" height="1"/>
<rect x="607" y="386" width="1" height="1"/>
<rect x="627" y="386" width="1" height="1"/>
<rect x="646" y="386" width="1" height="1"/>
<rect x="666" y="386" width="1" height="1"/>
<rect x="686" y="386" width="1" height="1"/>
<rect x="705" y="386" width="1" height="1"/>
<rect x="725" y="386" width="1" height="1"/>
<rect x="744" y="386" width="1" height="1"/>
<rect x="764" y="386" width="1" height="1"/>
<rect x="783" y="386" width="1" height="1"/>
<rect x="803" y="386" width="1" height="1"/>
<rect x="822" y="386" width="1" height="1"/>
<rect x="842" y="386" width="1" height="1"/>
<rect x="862" y="386" width="1" height="1"/>
<rect x="881" y="386" width="1" height="1"/>
<rect x="901" y="386" width="1" height="1"/>
<rect x="920" y="386" width="1" height="1"/>
<rect x="940" y="386" width="1" height="1"/>
<rect x="959" y="386" width="1" height="1"/>
<rect x="21" y="412" width="1" height="1"/>
<rect x="40" y="412" width="1" height="1"/>
<rect x="60" y="412" width="1" height="1"/>
<rect x="79" y="412" width="1" height="1"/>
<rect x="99" y="412" width="1" height="1"/>
<rect x="118" y="412" width="1" height="1"/>
<rect x="138" y="412" width="1" height="1"/>
<rect x="157" y="412" width="1" height="1"/>
<rect x="177" y="412" width="1" height="1"/>
<rect x="197" y="412" width="1" height="1"/>
<rect x="216" y="412" width="1" height="1"/>
<rect x="236" y="412" width="1" height="1"/>
<rect x="255" y="412" width="1" height="1"/>
<rect x="275" y="412" width="1" height="1"/>
<rect x="294" y="412" width="1" height="1"/>
<rect x="314" y="412" width="1" height="1"/>
<rect x="333" y="412" width="1" height="1"/>
<rect x="353" y="412" width="1" height="1"/>
<rect x="373" y="412" width="1" height="1"/>
<rect x="392" y="412" width="1" height="1"/>
<rect x="412" y="412" width="1" height="1"/>
<rect x="431" y="412" width="1" height="1"/>
<rect x="451" y="412" width="1" height="1"/>
<rect x="470" y="412" width="1" height="1"/>
<rect x="490" y="412" width="1" height="1"/>
<rect x="510" y="412" width="1" height="1"/>
<rect x="529" y="412" width="1" height="1"/>
<rect x="549" y="412" width="1" height="1"/>
<rect x="568" y="412" width="1" height="1"/>
<rect x="588" y="412" width="1" height="1"/>
<rect x="607" y="412" width="1" height="1"/>
<rect x="627" y="412" width="1" height="1"/>
<rect x="646" y="412" width="1" height="1"/>
<rect x="666" y="412" width="1" height="1"/>
<rect x="686" y="412" width="1" height="1"/>
<rect x="705" y="412" width="1" height="1"/>
<rect x="725" y="412" width="1" height="1"/>
<rect x="744" y="412" width="1" height="1"/>
<rect x="764" y="412" width="1" height="1"/>
<rect x="783" y="412" width="1" height="1"/>
<rect x="803" y="412" width="1" height="1"/>
<rect x="822" y="412" width="1" height="1"/>
<rect x="842" y="412" width="1" height="1"/>
<rect x="862" y="412" width="1" height="1"/>
<rect x="881" y="412" width="1" height="1"/>
<rect x="901" y="412" width="1" height="1"/>
<rect x="920" y="412" width="1" height="1"/>
<rect x="940" y="412" width="1" height="1"/>
<rect x="959" y="412" width="1" height="1"/>
<rect x="21" y="439" width="1" height="1"/>
<rect x="40" y="439" width="1" height="1"/>
<rect x="60" y="439" width="1" height="1"/>
<rect x="79" y="439" width="1" height="1"/>
<rect x="99" y="439" width="1" height="1"/>
<rect x="118" y="439" width="1" height="1"/>
<rect x="138" y="439" width="1" height="1"/>
<rect x="157" y="439" width="1" height="1"/>
<rect x="177" y="439" width="1" height="1"/>
<rect x="197" y="439" width="1" height="1"/>
<rect x="216" y="439" width="1" height="1"/>
<rect x="236" y="439" width="1" height="1"/>
<rect x="255" y="439" width="1" height="1"/>
<rect x="275" y="439" width="1" height="1"/>
<rect x="294" y="439" width="1" height="1"/>
<rect x="314" y="439" width="1" height="1"/>
<rect x="333" y="439" width="1" height="1"/>
<rect x="353" y="439" width="1" height="1"/>
<rect x="373" y="439" width="1" height="1"/>
<rect x="392" y="439" width="1" height="1"/>
<rect x="412" y="439" width="1" height="1"/>
<rect x="431" y="439" width="1" height="1"/>
<rect x="451" y="439" width="1" height="1"/>
<rect x="470" y="439" width="1" height="1"/>
<rect x="490" y="439" width="1" height="1"/>
<rect x="510" y="439" width="1" height="1"/>
<rect x="529" y="439" width="1" height="1"/>
<rect x="549" y="439" width="1" height="1"/>
<rect x="568" y="439" width="1" height="1"/>
<rect x="588" y="439" width="1" height="1"/>
<rect x="607" y="439" width="1" height="1"/>
<rect x="627" y="439" width="1" height="1"/>
<rect x="646" y="439" width="1" height="1"/>
<rect x="666" y="439" width="1" height="1"/>
<rect x="686" y="439" width="1" height="1"/>
<rect x="705" y="439" width="1" height="1"/>
<rect x="725" y="439" width="1" height="1"/>
<rect x="744" y="439" width="1" height="1"/>
<rect x="764" y="439" width="1" height="1"/>
<rect x="783" y="439" width="1" height="1"/>
<rect x="803" y="439" width="1" height="1"/>
<rect x="822" y="439" width="1" height="1"/>
<rect x="842" y="439" width="1" height="1"/>
<rect x="862" y="439" width="1" height="1"/>
<rect x="881" y="439" width="1" height="1"/>
<rect x="901" y="439" width="1" height="1"/>
<rect x="920" y="439" width="1" height="1"/>
<rect x="940" y="439" width="1" height="1"/>
<rect x="959" y="439" width="1" height="1"/>
<rect x="21" y="465" width="1" height="1"/>
<rect x="40" y="465" width="1" height="1"/>
<rect x="60" y="465" width="1" height="1"/>
<rect x="79" y="465" width="1" height="1"/>
<rect x="99" y="465" width="1" height="1"/>
<rect x="118" y="465" width="1" height="1"/>
<rect x="138" y="465" width="1" height="1"/>
<rect x="157" y="465" width="1" height="1"/>
<rect x="177" y="465" width="1" height="1"/>
<rect x="197" y="465" width="1" height="1"/>
<rect x="216" y="465" width="1" height="1"/>
<rect x="236" y="465" width="1" height="1"/>
<rect x="255" y="465" width="1" height="1"/>
<rect x="275" y="465" width="1" height="1"/>
<rect x="294" y="465" width="1" height="1"/>
<rect x="314" y="465" width="1" height="1"/>
<rect x="333" y="465" width="1" height="1"/>
<rect x="353" y="465" width="1" height="1"/>
<rect x="373" y="465" width="1" height="1"/>
<rect x="392" y="465" width="1" height="1"/>
<rect x="412" y="465" width="1" height="1"/>
<rect x="431" y="465" width="1" height="1"/>
<rect x="451" y="465" width="1" height="1"/>
<rect x="470" y="465" width="1" height="1"/>
<rect x="490" y="465" width="1" height="1"/>
<rect x="510" y="465" width="1" height="1"/>
<rect x="529" y="465" width="1" height="1"/>
<rect x="549" y="465" width="1" height="1"/>
<rect x="568" y="465" width="1" height="1"/>
<rect x="588" y="465" width="1" height="1"/>
<rect x="607" y="465" width="1" height="1"/>
<rect x="627" y="465" width="1" height="1"/>
<rect x="646" y="465" width="1" height="1"/>
<rect x="666" y="465" width="1" height="1"/>
<rect x="686" y="465" width="1" height="1"/>
<rect x="705" y="465" width="1" height="1"/>
<rect x="725" y="465" width="1" height="1"/>
<rect x="744" y="465" width="1" height="1"/>
<rect x="764" y="465" width="1" height="1"/>
<rect x="783" y="465" width="1" height="1"/>
<rect x="803" y="465" width="1" height="1"/>
<rect x="822" y="465" width="1" height="1"/>
<rect x="842" y="465" width="1" height="1"/>
<rect x="862" y="465" width="1" height="1"/>
<rect x="881" y="465" width="1" height="1"/>
<rect x="901" y="465" width="1" height="1"/>
<rect x="920" y="465" width="1" height="1"/>
<rect x="940" y="465" width="1" height="1"/>
<rect x="959" y="465" width="1" height="1"/>
<rect x="21" y="491" width="1" height="1"/>
<rect x="40" y="491" width="1" height="1"/>
<rect x="60" y="491" width="1" height="1"/>
<rect x="79" y="491" width="1" height="1"/>
<rect x="99" y="491" width="1" height="1"/>
<rect x="118" y="491" width="1" height="1"/>
<rect x="138" y="491" width="1" height="1"/>
<rect x="157" y="491" width="1" height="1"/>
<rect x="177" y="491" width="1" height="1"/>
<rect x="197" y="491" width="1" height="1"/>
<rect x="216" y="491" width="1" height="1"/>
<rect x="236" y="491" width="1" height="1"/>
<rect x="255" y="491" width="1" height="1"/>
<rect x="275" y="491" width="1" height="1"/>
<rect x="294" y="491" width="1" height="1"/>
<rect x="314" y="491" width="1" height="1"/>
<rect x="333" y="491" width="1" height="1"/>
<rect x="353" y="491" width="1" height="1"/>
<rect x="373" y="491" width="1" height="1"/>
<rect x="392" y="491" width="1" height="1"/>
<rect x="412" y="491" width="1" height="1"/>
<rect x="431" y="491" width="1" height="1"/>
<rect x="451" y="491" width="1" height="1"/>
<rect x="470" y="491" width="1" height="1"/>
<rect x="490" y="491" width="1" height="1"/>
<rect x="510" y="491" width="1" height="1"/>
<rect x="529" y="491" width="1" height="1"/>
<rect x="549" y="491" width="1" height="1"/>
<rect x="568" y="491" width="1" height="1"/>
<rect x="588" y="491" width="1" height="1"/>
<rect x="607" y="491" width="1" height="1"/>
<rect x="627" y="491" width="1" height="1"/>
<rect x="646" y="491" width="1" height="1"/>
<rect x="666" y="491" width="1" height="1"/>
<rect x="686" y="491" width="1" height="1"/>
<rect x="705" y="491" width="1" height="1"/>
<rect x="725" y="491" width="1" height="1"/>
<rect x="744" y="491" width="1" height="1"/>
<rect x="764" y="491" width="1" height="1"/>
<rect x="783" y="491" width="1" height="1"/>
<rect x="803" y="491" width="1" height="1"/>
<rect x="822" y="491" width="1" height="1"/>
<rect x="842" y="491" width="1" height="1"/>
<rect x="862" y="491" width="1" height="1"/>
<rect x="881" y="491" width="1" height="1"/>
<rect x="901" y="491" width="1" height="1"/>
<rect x="920" y="491" width="1" height="1"/>
<rect x="940" y="491" width="1" height="1"/>
<rect x="959" y="491" width="1" height="1"/>
<rect x="21" y="518" width="1" height="1"/>
<rect x="40" y="518" width="1" height="1"/>
<rect x="60" y="518" width="1" height="1"/>
<rect x="79" y="518" width="1" height="1"/>
<rect x="99" y="518" width="1" height="1"/>
<rect x="118" y="518" width="1" height="1"/>
<rect x="138" y="518" width="1" height="1"/>
<rect x="157" y="518" width="1" height="1"/>
<rect x="177" y="518" width="1" height="1"/>
<rect x="197" y="518" width="1" height="1"/>
<rect x="216" y="518" width="1" height="1"/>
<rect x="236" y="518" width="1" height="1"/>
<rect x="255" y="518" width="1" height="1"/>
<rect x="275" y="518" width="1" height="1"/>
<rect x="294" y="518" width="1" height="1"/>
<rect x="314" y="518" width="1" height="1"/>
<rect x="333" y="518" width="1" height="1"/>
<rect x="353" y="518" width="1" height="1"/>
<rect x="373" y="518" width="1" height="1"/>
<rect x="392" y="518" width="1" height="1"/>
<rect x="412" y="518" width="1" height="1"/>
<rect x="431" y="518" width="1" height="1"/>
<rect x="451" y="518" width="1" height="1"/>
<rect x="470" y="518" width="1" height="1"/>
<rect x="490" y="518" width="1" height="1"/>
<rect x="510" y="518" width="1" height="1"/>
<rect x="529" y="518" width="1" height="1"/>
<rect x="549" y="518" width="1" height="1"/>
<rect x="568" y="518" width="1" height="1"/>
<rect x="588" y="518" width="1" height="1"/>
<rect x="607" y="518" width="1" height="1"/>
<rect x="627" y="518" width="1" height="1"/>
<rect x="646" y="518" width="1" height="1"/>
<rect x="666" y="518" width="1" height="1"/>
<rect x="686" y="518" width="1" height="1"/>
<rect x="705" y="518" width="1" height="1"/>
<rect x="725" y="518" width="1" height="1"/>
<rect x="744" y="518" width="1" height="1"/>
<rect x="764" y="518" width="1" height="1"/>
<rect x="783" y="518" width="1" height="1"/>
<rect x="803" y="518" width="1" height="1"/>
<rect x="822" y="518" width="1" height="1"/>
<rect x="842" y="518" width="1" height="1"/>
<rect x="862" y="518" width="1" height="1"/>
<rect x="881" y="518" width="1" height="1"/>
<rect x="901" y="518" width="1" height="1"/>
<rect x="920" y="518" width="1" height="1"/>
<rect x="940" y="518" width="1" height="1"/>
<rect x="959" y="518" width="1" height="1"/>
<rect x="21" y="544" width="1" height="1"/>
<rect x="40" y="544" width="1" height="1"/>
<rect x="60" y="544" width="1" height="1"/>
<rect x="79" y="544" width="1" height="1"/>
<rect x="99" y="544" width="1" height="1"/>
<rect x="118" y="544" width="1" height="1"/>
<rect x="138" y="544" width="1" height="1"/>
<rect x="157" y="544" width="1" height="1"/>
<rect x="177" y="544" width="1" height="1"/>
<rect x="197" y="544" width="1" height="1"/>
<rect x="216" y="544" width="1" height="1"/>
<rect x="236" y="544" width="1" height="1"/>
<rect x="255" y="544" width="1" height="1"/>
<rect x="275" y="544" width="1" height="1"/>
<rect x="294" y="544" width="1" height="1"/>
<rect x="314" y="544" width="1" height="1"/>
<rect x="333" y="544" width="1" height="1"/>
<rect x="353" y="544" width="1" height="1"/>
<rect x="373" y="544" width="1" height="1"/>
<rect x="392" y="544" width="1" height="1"/>
<rect x="412" y="544" width="1" height="1"/>
<rect x="431" y="544" width="1" height="1"/>
<rect x="451" y="544" width="1" height="1"/>
<rect x="470" y="544" width="1" height="1"/>
<rect x="490" y="544" width="1" height="1"/>
<rect x="510" y="544" width="1" height="1"/>
<rect x="529" y="544" width="1" height="1"/>
<rect x="549" y="544" width="1" height="1"/>
<rect x="568" y="544" width="1" height="1"/>
<rect x="588" y="544" width="1" height="1"/>
<rect x="607" y="544" width="1" height="1"/>
<rect x="627" y="544" width="1" height="1"/>
<rect x="646" y="544" width="1" height="1"/>
<rect x="666" y="544" width="1" height="1"/>
<rect x="686" y="544" width="1" height="1"/>
<rect x="705" y="544" width="1" height="1"/>
<rect x="725" y="544" width="1" height="1"/>
<rect x="744" y="544" width="1" height="1"/>
<rect x="764" y="544" width="1" height="1"/>
<rect x="783" y="544" width="1" height="1"/>
<rect x="803" y="544" width="1" height="1"/>
<rect x="822" y="544" width="1" height="1"/>
<rect x="842" y="544" width="1" height="1"/>
<rect x="862" y="544" width="1" height="1"/>
<rect x="881" y="544" width="1" height="1"/>
<rect x="901" y="544" width="1" height="1"/>
<rect x="920" y="544" width="1" height="1"/>
<rect x="940" y="544" width="1" height="1"/>
<rect x="959" y="544" width="1" height="1"/>
<rect x="40" y="31" width="1" height="1"/>
<rect x="40" y="36" width="1" height="1"/>
<rect x="40" y="41" width="1" height="1"/>
<rect x="40" y="47" width="1" height="1"/>
<rect x="40" y="52" width="1" height="1"/>
<rect x="40" y="57" width="1" height="1"/>
<rect x="40" y="63" width="1" height="1"/>
<rect x="40" y="68" width="1" height="1"/>
<rect x="40" y="73" width="1" height="1"/>
<rect x="40" y="78" width="1" height="1"/>
<rect x="40" y="84" width="1" height="1"/>
<rect x="40" y="89" width="1" height="1"/>
<rect x="40" y="94" width="1" height="1"/>
<rect x="40" y="99" width="1" height="1"/>
<rect x="40" y="105" width="1" height="1"/>
<rect x="40" y="110" width="1" height="1"/>
<rect x="40" y="115" width="1" height="1"/>
<rect x="40" y="120" width="1" height="1"/>
<rect x="40" y="126" width="1" height="1"/>
<rect x="40" y="131" width="1" height="1"/>
<rect x="40" y="136" width="1" height="1"/>
<rect x="40" y="142" width="1" height="1"/>
<rect x="40" y="147" width="1" height="1"/>
<rect x="40" y="152" width="1" height="1"/>
<rect x="40" y="157" width="1" height="1"/>
<rect x="40" y="163" width="1" height="1"/>
<rect x="40" y="168" width="1" height="1"/>
<rect x="40" y="173" width="1" height="1"/>
<rect x="40" y="178" width="1" height="1"/>
<rect x="40" y="184" width="1" height="1"/>
<rect x="40" y="189" width="1" height="1"/>
<rect x="40" y="194" width="1" height="1"/>
<rect x="40" y="200" width="1" height="1"/>
<rect x="40" y="205" width="1" height="1"/>
<rect x="40" y="210" width="1" height="1"/>
<rect x="40" y="215" width="1" height="1"/>
<rect x="40" y="221" width="1" height="1"/>
<rect x="40" y="226" width="1" height="1"/>
<rect x="40" y="231" width="1" height="1"/>
<rect x="40" y="236" width="1" height="1"/>
<rect x="40" y="242" width="1" height="1"/>
<rect x="40" y="247" width="1" height="1"/>
<rect x="40" y="252" width="1" height="1"/>
<rect x="40" y="258" width="1" height="1"/>
<rect x="40" y="263" width="1" height="1"/>
<rect x="40" y="268" width="1" height="1"/>
<rect x="40" y="273" width="1" height="1"/>
<rect x="40" y="279" width="1" height="1"/>
<rect x="40" y="284" width="1" height="1"/>
<rect x="40" y="289" width="1" height="1"/>
<rect x="40" y="297" width="1" height="1"/>
<rect x="40" y="302" width="1" height="1"/>
<rect x="40" y="307" width="1" height="1"/>
<rect x="40" y="312" width="1" height="1"/>
<rect x="40" y="318" width="1" height="1"/>
<rect x="40" y="323" width="1" height="1"/>
<rect x="40" y="328" width="1" height="1"/>
<rect x="40" y="334" width="1" height="1"/>
<rect x="40" y="339" width="1" height="1"/>
<rect x="40" y="344" width="1" height="1"/>
<rect x="40" y="349" width="1" height="1"/>
<rect x="40" y="355" width="1" height="1"/>
<rect x="40" y="360" width="1" height="1"/>
<rect x="40" y="365" width="1" height="1"/>
<rect x="40" y="370" width="1" height="1"/>
<rect x="40" y="376" width="1" height="1"/>
<rect x="40" y="381" width="1" height="1"/>
<rect x="40" y="386" width="1" height="1"/>
<rect x="40" y="391" width="1" height="1"/>
<rect x="40" y="397" width="1" height="1"/>
<rect x="40" y="402" width="1" height="1"/>
<rect x="40" y="407" width="1" height="1"/>
<rect x="40" y="412" width="1" height="1"/>
<rect x="40" y="418" width="1" height="1"/>
<rect x="40" y="423" width="1" height="1"/>
<rect x="40" y="428" width="1" height="1"/>
<rect x="40" y="434" width="1" height="1"/>
<rect x="40" y="439" width="1" height="1"/>
<rect x="40" y="444" width="1" height="1"/>
<rect x="40" y="449" width="1" height="1"/>
<rect x="40" y="455" width="1" height="1"/>
<rect x="40" y="460" width="1" height="1"/>
<rect x="40" y="465" width="1" height="1"/>
<rect x="40" y="470" width="1" height="1"/>
<rect x="40" y="476" width="1" height="1"/>
<rect x="40" y="481" width="1" height="1"/>
<rect x="40" y="486" width="1" height="1"/>
<rect x="40" y="491" width="1" height="1"/>
<rect x="40" y="497" width="1" height="1"/>
<rect x="40" y="502" width="1" height="1"/>
<rect x="40" y="507" width="1" height="1"/>
<rect x="40" y="512" width="1" height="1"/>
<rect x="40" y="518" width="1" height="1"/>
<rect x="40" y="523" width="1" height="1"/>
<rect x="40" y="528" width="1" height="1"/>
<rect x="40" y="534" width="1" height="1"/>
<rect x="40" y="539" width="1" height="1"/>
<rect x="40" y="544" width="1" height="1"/>
<rect x="40" y="549" width="1" height="1"/>
<rect x="40" y="555" width="1" height="1"/>
<rect x="138" y="31" width="1" height="1"/>
<rect x="138" y="36" width="1" height="1"/>
<rect x="138" y="41" width="1" height="1"/>
<rect x="138" y="47" width="1" height="1"/>
<rect x="138" y="52" width="1" height="1"/>
<rect x="138" y="57" width="1" height="1"/>
<rect x="138" y="63" width="1" height="1"/>
<rect x="138" y="68" width="1" height="1"/>
<rect x="138" y="73" width="1" height="1"/>
<rect x="138" y="78" width="1" height="1"/>
<rect x="138" y="84" width="1" height="1"/>
<rect x="138" y="89" width="1" height="1"/>
<rect x="138" y="94" width="1" height="1"/>
<rect x="138" y="99" width="1" height="1"/>
<rect x="138" y="105" width="1" height="1"/>
<rect x="138" y="110" width="1" height="1"/>
<rect x="138" y="115" width="1" height="1"/>
<rect x="138" y="120" width="1" height="1"/>
<rect x="138" y="126" width="1" height="1"/>
<rect x="138" y="131" width="1" height="1"/>
<rect x="138" y="136" width="1" height="1"/>
<rect x="138" y="142" width="1" height="1"/>
<rect x="138" y="147" width="1" height="1"/>
<rect x="138" y="152" width="1" height="1"/>
<rect x="138" y="157" width="1" height="1"/>
<rect x="138" y="163" width="1" height="1"/>
<rect x="138" y="168" width="1" height="1"/>
<rect x="138" y="173" width="1" height="1"/>
<rect x="138" y="178" width="1" height="1"/>
<rect x="138" y="184" width="1" height="1"/>
<rect x="138" y="189" width="1" height="1"/>
<rect x="138" y="194" width="1" height="1"/>
<rect x="138" y="200" width="1" height="1"/>
<rect x="138" y="205" width="1" height="1"/>
<rect x="138" y="210" width="1" height="1"/>
<rect x="138" y="215" width="1" height="1"/>
<rect x="138" y="221" width="1" height="1"/>
<rect x="138" y="226" width="1" height="1"/>
<rect x="138" y="231" width="1" height="1"/>
<rect x="138" y="236" width="1" height="1"/>
<rect x="138" y="242" width="1" height="1"/>
<rect x="138" y="247" width="1" height="1"/>
<rect x="138" y="252" width="1" height="1"/>
<rect x="138" y="258" width="1" height="1"/>
<rect x="138" y="263" width="1" height="1"/>
<rect x="138" y="268" width="1" height="1"/>
<rect x="138" y="273" width="1" height="1"/>
<rect x="138" y="279" width="1" height="1"/>
<rect x="138" y="284" width="1" height="1"/>
<rect x="138" y="289" width="1" height="1"/>
<rect x="138" y="297" width="1" height="1"/>
<rect x="138" y="302" width="1" height="1"/>
<rect x="138" y="307" width="1" height="1"/>
<rect x="138" y="312" width="1" height="1"/>
<rect x="138" y="318" width="1" height="1"/>
<rect x="138" y="323" width="1" height="1"/>
<rect x="138" y="328" width="1" height="1"/>
<rect x="138" y="334" width="1" height="1"/>
<rect x="138" y="339" width="1" height="1"/>
<rect x="138" y="344" width="1" height="1"/>
<rect x="138" y="349" width="1" height="1"/>
<rect x="138" y="355" width="1" height="1"/>
<rect x="138" y="360" width="1" height="1"/>
<rect x="138" y="365" width="1" height="1"/>
<rect x="138" y="370" width="1" height="1"/>
<rect x="138" y="376" width="1" height="1"/>
<rect x="138" y="381" width="1" height="1"/>
<rect x="138" y="386" width="1" height="1"/>
<rect x="138" y="391" width="1" height="1"/>
<rect x="138" y="397" width="1" height="1"/>
<rect x="138" y="402" width="1" height="1"/>
<rect x="138" y="407" width="1" height="1"/>
<rect x="138" y="412" width="1" height="1"/>
<rect x="138" y="418" width="1" height="1"/>
<rect x="138" y="423" width="1" height="1"/>
<rect x="138" y="428" width="1" height="1"/>
<rect x="138" y="434" width="1" height="1"/>
<rect x="138" y="439" width="1" height="1"/>
<rect x="138" y="444" width="1" height="1"/>
<rect x="138" y="449" width="1" height="1"/>
<rect x="138" y="455" width="1" height="1"/>
<rect x="138" y="460" width="1" height="1"/>
<rect x="138" y="465" width="1" height="1"/>
<rect x="138" y="470" width="1" height="1"/>
<rect x="138" y="476" width="1" height="1"/>
<rect x="138" y="481" width="1" height="1"/>
<rect x="138" y="486" width="1" height="1"/>
<rect x="138" y="491" width="1" height="1"/>
<rect x="138" y="497" width="1" height="1"/>
<rect x="138" y="502" width="1" height="1"/>
<rect x="138" y="507" width="1" height="1"/>
<rect x="138" y="512" width="1" height="1"/>
<rect x="138" y="518" width="1" height="1"/>
<rect x="138" y="523" width="1" height="1"/>
<rect x="138" y="528" width="1" height="1"/>
<rect x="138" y="534" width="1" height="1"/>
<rect x="138" y="539" width="1" height="1"/>
<rect x="138" y="544" width="1" height="1"/>
<rect x="138" y="549" width="1" height="1"/>
<rect x="138" y="555" width="1" height="1"/>
<rect x="236" y="31" width="1" height="1"/>
<rect x="236" y="36" width="1" height="1"/>
<rect x="236" y="41" width="1" height="1"/>
<rect x="236" y="47" width="1" height="1"/>
<rect x="236" y="52" width="1" height="1"/>
<rect x="236" y="57" width="1" height="1"/>
<rect x="236" y="63" width="1" height="1"/>
<rect x="236" y="68" width="1" height="1"/>
<rect x="236" y="73" width="1" height="1"/>
<rect x="236" y="78" width="1" height="1"/>
<rect x="236" y="84" width="1" height="1"/>
<rect x="236" y="89" width="1" height="1"/>
<rect x="236" y="94" width="1" height="1"/>
<rect x="236" y="99" width="1" height="1"/>
<rect x="236" y="105" width="1" height="1"/>
<rect x="236" y="110" width="1" height="1"/>
<rect x="236" y="115" width="1" height="1"/>
<rect x="236" y="120" width="1" height="1"/>
<rect x="236" y="126" width="1" height="1"/>
<rect x="236" y="131" width="1" height="1"/>
<rect x="236" y="136" width="1" height="1"/>
<rect x="236" y="142" width="1" height="1"/>
<rect x="236" y="147" width="1" height="1"/>
<rect x="236" y="152" width="1" height="1"/>
<rect x="236" y="157" width="1" height="1"/>
<rect x="236" y="163" width="1" height="1"/>
<rect x="236" y="168" width="1" height="1"/>
<rect x="236" y="173" width="1" height="1"/>
<rect x="236" y="178" width="1" height="1"/>
<rect x="236" y="184" width="1" height="1"/>
<rect x="236" y="189" width="1" height="1"/>
<rect x="236" y="194" width="1" height="1"/>
<rect x="236" y="200" width="1" height="1"/>
<rect x="236" y="205" width="1" height="1"/>
<rect x="236" y="210" width="1" height="1"/>
<rect x="236" y="215" width="1" height="1"/>
<rect x="236" y="221" width="1" height="1"/>
<rect x="236" y="226" width="1" height="1"/>
<rect x="236" y="231" width="1" height="1"/>
<rect x="236" y="236" width="1" height="1"/>
<rect x="236" y="242" width="1" height="1"/>
<rect x="236" y="247" width="1" height="1"/>
<rect x="236" y="252" width="1" height="1"/>
<rect x="236" y="258" width="1" height="1"/>
<rect x="236" y="263" width="1" height="1"/>
<rect x="236" y="268" width="1" height="1"/>
<rect x="236" y="273" width="1" height="1"/>
<rect x="236" y="279" width="1" height="1"/>
<rect x="236" y="284" width="1" height="1"/>
<rect x="236" y="289" width="1" height="1"/>
<rect x="236" y="297" width="1" height="1"/>
<rect x="236" y="302" width="1" height="1"/>
<rect x="236" y="307" width="1" height="1"/>
<rect x="236" y="312" width="1" height="1"/>
<rect x="236" y="318" width="1" height="1"/>
<rect x="236" y="323" width="1" height="1"/>
<rect x="236" y="328" width="1" height="1"/>
<rect x="236" y="334" width="1" height="1"/>
<rect x="236" y="339" width="1" height="1"/>
<rect x="236" y="344" width="1" height="1"/>
<rect x="236" y="349" width="1" height="1"/>
<rect x="236" y="355" width="1" height="1"/>
<rect x="236" y="360" width="1" height="1"/>
<rect x="236" y="365" width="1" height="1"/>
<rect x="236" y="370" width="1" height="1"/>
<rect x="236" y="376" width="1" height="1"/>
<rect x="236" y="381" width="1" height="1"/>
<rect x="236" y="386" width="1" height="1"/>
<rect x="236" y="391" width="1" height="1"/>
<rect x="236" y="397" width="1" height="1"/>
<rect x="236" y="402" width="1" height="1"/>
<rect x="236" y="407" width="1" height="1"/>
<rect x="236" y="412" width="1" height="1"/>
<rect x="236" y="418" width="1" height="1"/>
<rect x="236" y="423" width="1" height="1"/>
<rect x="236" y="428" width="1" height="1"/>
<rect x="236" y="434" width="1" height="1"/>
<rect x="236" y="439" width="1" height="1"/>
<rect x="236" y="444" width="1" height="1"/>
<rect x="236" y="449" width="1" height="1"/>
<rect x="236" y="455" width="1" height="1"/>
<rect x="236" y="460" width="1" height="1"/>
<rect x="236" y="465" width="1" height="1"/>
<rect x="236" y="470" width="1" height="1"/>
<rect x="236" y="476" width="1" height="1"/>
<rect x="236" y="481" width="1" height="1"/>
<rect x="236" y="486" width="1" height="1"/>
<rect x="236" y="491" width="1" height="1"/>
<rect x="236" y="497" width="1" height="1"/>
<rect x="236" y="502" width="1" height="1"/>
<rect x="236" y="507" width="1" height="1"/>
<rect x="236" y="512" width="1" height="1"/>
<rect x="236" y="518" width="1" height="1"/>
<rect x="236" y="523" width="1" height="1"/>
<rect x="236" y="528" width="1" height="1"/>
<rect x="236" y="534" width="1" height="1"/>
<rect x="236" y="539" width="1" height="1"/>
<rect x="236" y="544" width="1" height="1"/>
<rect x="236" y="549" width="1" height="1"/>
<rect x="236" y="555" width="1" height="1"/>
<rect x="333" y="31" width="1" height="1"/>
<rect x="333" y="36" width="1" height="1"/>
<rect x="333" y="41" width="1" height="1"/>
<rect x="333" y="47" width="1" height="1"/>
<rect x="333" y="52" width="1" height="1"/>
<rect x="333" y="57" width="1" height="1"/>
<rect x="333" y="63" width="1" height="1"/>
<rect x="333" y="68" width="1" height="1"/>
<rect x="333" y="73" width="1" height="1"/>
<rect x="333" y="78" width="1" height="1"/>
<rect x="333" y="84" width="1" height="1"/>
<rect x="333" y="89" width="1" height="1"/>
<rect x="333" y="94" width="1" height="1"/>
<rect x="333" y="99" width="1" height="1"/>
<rect x="333" y="105" width="1" height="1"/>
<rect x="333" y="110" width="1" height="1"/>
<rect x="333" y="115" width="1" height="1"/>
<rect x="333" y="120" width="1" height="1"/>
<rect x="333" y="126" width="1" height="1"/>
<rect x="333" y="131" width="1" height="1"/>
<rect x="333" y="136" width="1" height="1"/>
<rect x="333" y="142" width="1" height="1"/>
<rect x="333" y="147" width="1" height="1"/>
<rect x="333" y="152" width="1" height="1"/>
<rect x="333" y="157" width="1" height="1"/>
<rect x="333" y="163" width="1" height="1"/>
<rect x="333" y="168" width="1" height="1"/>
<rect x="333" y="173" width="1" height="1"/>
<rect x="333" y="178" width="1" height="1"/>
<rect x="333" y="184" width="1" height="1"/>
<rect x="333" y="189" width="1" height="1"/>
<rect x="333" y="194" width="1" height="1"/>
<rect x="333" y="200" width="1" height="1"/>
<rect x="333" y="205" width="1" height="1"/>
<rect x="333" y="210" width="1" height="1"/>
<rect x="333" y="215" width="1" height="1"/>
<rect x="333" y="221" width="1" height="1"/>
<rect x="333" y="226" width="1" height="1"/>
<rect x="333" y="231" width="1" height="1"/>
<rect x="333" y="236" width="1" height="1"/>
<rect x="333" y="242" width="1" height="1"/>
<rect x="333" y="247" width="1" height="1"/>
<rect x="333" y="252" width="1" height="1"/>
<rect x="333" y="258" width="1" height="1"/>
<rect x="333" y="263" width="1" height="1"/>
<rect x="333" y="268" width="1" height="1"/>
<rect x="333" y="273" width="1" height="1"/>
<rect x="333" y="279" width="1" height="1"/>
<rect x="333" y="284" width="1" height="1"/>
<rect x="333" y="289" width="1" height="1"/>
<rect x="333" y="297" width="1" height="1"/>
<rect x="333" y="302" width="1" height="1"/>
<rect x="333" y="307" width="1" height="1"/>
<rect x="333" y="312" width="1" height="1"/>
<rect x="333" y="318" width="1" height="1"/>
<rect x="333" y="323" width="1" height="1"/>
<rect x="333" y="328" width="1" height="1"/>
<rect x="333" y="334" width="1" height="1"/>
<rect x="333" y="339" width="1" height="1"/>
<rect x="333" y="344" width="1" height="1"/>
<rect x="333" y="349" width="1" height="1"/>
<rect x="333" y="355" width="1" height="1"/>
<rect x="333" y="360" width="1" height="1"/>
<rect x="333" y="365" width="1" height="1"/>
<rect x="333" y="370" width="1" height="1"/>
<rect x="333" y="376" width="1" height="1"/>
<rect x="333" y="381" width="1" height="1"/>
<rect x="333" y="386" width="1" height="1"/>
<rect x="333" y="391" width="1" height="1"/>
<rect x="333" y="397" width="1" height="1"/>
<rect x="333" y="402" width="1" height="1"/>
<rect x="333" y="407" width="1" height="1"/>
<rect x="333" y="412" width="1" height="1"/>
<rect x="333" y="418" width="1" height="1"/>
<rect x="333" y="423" width="1" height="1"/>
<rect x="333" y="428" width="1" height="1"/>
<rect x="333" y="434" width="1" height="1"/>
<rect x="333" y="439" width="1" height="1"/>
<rect x="333" y="444" width="1" height="1"/>
<rect x="333" y="449" width="1" height="1"/>
<rect x="333" y="455" width="1" height="1"/>
<rect x="333" y="460" width="1" height="1"/>
<rect x="333" y="465" width="1" height="1"/>
<rect x="333" y="470" width="1" height="1"/>
<rect x="333" y="476" width="1" height="1"/>
<rect x="333" y="481" width="1" height="1"/>
<rect x="333" y="486" width="1" height="1"/>
<rect x="333" y="491" width="1" height="1"/>
<rect x="333" y="497" width="1" height="1"/>
<rect x="333" y="502" width="1" height="1"/>
<rect x="333" y="507" width="1" height="1"/>
<rect x="333" y="512" width="1" height="1"/>
<rect x="333" y="518" width="1" height="1"/>
<rect x="333" y="523" width="1" height="1"/>
<rect x="333" y="528" width="1" height="1"/>
<rect x="333" y="534" width="1" height="1"/>
<rect x="333" y="539" width="1" height="1"/>
<rect x="333" y="544" width="1" height="1"/>
<rect x="333" y="549" width="1" height="1"/>
<rect x="333" y="555" width="1" height="1"/>
<rect x="431" y="31" width="1" height="1"/>
<rect x="431" y="36" width="1" height="1"/>
<rect x="431" y="41" width="1" height="1"/>
<rect x="431" y="47" width="1" height="1"/>
<rect x="431" y="52" width="1" height="1"/>
<rect x="431" y="57" width="1" height="1"/>
<rect x="431" y="63" width="1" height="1"/>
<rect x="431" y="68" width="1" height="1"/>
<rect x="431" y="73" width="1" height="1"/>
<rect x="431" y="78" width="1" height="1"/>
<rect x="431" y="84" width="1" height="1"/>
<rect x="431" y="89" width="1" height="1"/>
<rect x="431" y="94" width="1" height="1"/>
<rect x="431" y="99" width="1" height="1"/>
<rect x="431" y="105" width="1" height="1"/>
<rect x="431" y="110" width="1" height="1"/>
<rect x="431" y="115" width="1" height="1"/>
<rect x="431" y="120" width="1" height="1"/>
<rect x="431" y="126" width="1" height="1"/>
<rect x="431" y="131" width="1" height="1"/>
<rect x="431" y="136" width="1" height="1"/>
<rect x="431" y="142" width="1" height="1"/>
<rect x="431" y="147" width="1" height="1"/>
<rect x="431" y="152" width="1" height="1"/>
<rect x="431" y="157" width="1" height="1"/>
<rect x="431" y="163" width="1" height="1"/>
<rect x="431" y="168" width="1" height="1"/>
<rect x="431" y="173" width="1" height="1"/>
<rect x="431" y="178" width="1" height="1"/>
<rect x="431" y="184" width="1" height="1"/>
<rect x="431" y="189" width="1" height="1"/>
<rect x="431" y="194" width="1" height="1"/>
<rect x="431" y="200" width="1" height="1"/>
<rect x="431" y="205" width="1" height="1"/>
<rect x="431" y="210" width="1" height="1"/>
<rect x="431" y="215" width="1" height="1"/>
<rect x="431" y="221" width="1" height="1"/>
<rect x="431" y="226" width="1" height="1"/>
<rect x="431" y="231" width="1" height="1"/>
<rect x="431" y="236" width="1" height="1"/>
<rect x="431" y="242" width="1" height="1"/>
<rect x="431" y="247" width="1" height="1"/>
<rect x="431" y="252" width="1" height="1"/>
<rect x="431" y="258" width="1" height="1"/>
<rect x="431" y="263" width="1" height="1"/>
<rect x="431" y="268" width="1" height="1"/>
<rect x="431" y="273" width="1" height="1"/>
<rect x="431" y="279" width="1" height="1"/>
<rect x="431" y="284" width="1" height="1"/>
<rect x="431" y="289" width="1" height="1"/>
<rect x="431" y="297" width="1" height="1"/>
<rect x="431" y="302" width="1" height="1"/>
<rect x="431" y="307" width="1" height="1"/>
<rect x="431" y="312" width="1" height="1"/>
<rect x="431" y="318" width="1" height="1"/>
<rect x="431" y="323" width="1" height="1"/>
<rect x="431" y="328" width="1" height="1"/>
<rect x="431" y="334" width="1" height="1"/>
<rect x="431" y="339" width="1" height="1"/>
<rect x="431" y="344" width="1" height="1"/>
<rect x="431" y="349" width="1" height="1"/>
<rect x="431" y="355" width="1" height="1"/>
<rect x="431" y="360" width="1" height="1"/>
<rect x="431" y="365" width="1" height="1"/>
<rect x="431" y="370" width="1" height="1"/>
<rect x="431" y="376" width="1" height="1"/>
<rect x="431" y="381" width="1" height="1"/>
<rect x="431" y="386" width="1" height="1"/>
<rect x="431" y="391" width="1" height="1"/>
<rect x="431" y="397" width="1" height="1"/>
<rect x="431" y="402" width="1" height="1"/>
<rect x="431" y="407" width="1" height="1"/>
<rect x="431" y="412" width="1" height="1"/>
<rect x="431" y="418" width="1" height="1"/>
<rect x="431" y="423" width="1" height="1"/>
<rect x="431" y="428" width="1" height="1"/>
<rect x="431" y="434" width="1" height="1"/>
<rect x="431" y="439" width="1" height="1"/>
<rect x="431" y="444" width="1" height="1"/>
<rect x="431" y="449" width="1" height="1"/>
<rect x="431" y="455" width="1" height="1"/>
<rect x="431" y="460" width="1" height="1"/>
<rect x="431" y="465" width="1" height="1"/>
<rect x="431" y="470" width="1" height="1"/>
<rect x="431" y="476" width="1" height="1"/>
<rect x="431" y="481" width="1" height="1"/>
<rect x="431" y="486" width="1" height="1"/>
<rect x="431" y="491" width="1" height="1"/>
<rect x="431" y="497" width="1" height="1"/>
<rect x="431" y="502" width="1" height="1"/>
<rect x="431" y="507" width="1" height="1"/>
<rect x="431" y="512" width="1" height="1"/>
<rect x="431" y="518" width="1" height="1"/>
<rect x="431" y="523" width="1" height="1"/>
<rect x="431" y="528" width="1" height="1"/>
<rect x="431" y="534" width="1" height="1"/>
<rect x="431" y="539" width="1" height="1"/>
<rect x="431" y="544" width="1" height="1"/>
<rect x="431" y="549" width="1" height="1"/>
<rect x="431" y="555" width="1" height="1"/>
<rect x="529" y="31" width="1" height="1"/>
<rect x="529" y="36" width="1" height="1"/>
<rect x="529" y="41" width="1" height="1"/>
<rect x="529" y="47" width="1" height="1"/>
<rect x="529" y="52" width="1" height="1"/>
<rect x="529" y="57" width="1" height="1"/>
<rect x="529" y="63" width="1" height="1"/>
<rect x="529" y="68" width="1" height="1"/>
<rect x="529" y="73" width="1" height="1"/>
<rect x="529" y="78" width="1" height="1"/>
<rect x="529" y="84" width="1" height="1"/>
<rect x="529" y="89" width="1" height="1"/>
<rect x="529" y="94" width="1" height="1"/>
<rect x="529" y="99" width="1" height="1"/>
<rect x="529" y="105" width="1" height="1"/>
<rect x="529" y="110" width="1" height="1"/>
<rect x="529" y="115" width="1" height="1"/>
<rect x="529" y="120" width="1" height="1"/>
<rect x="529" y="126" width="1" height="1"/>
<rect x="529" y="131" width="1" height="1"/>
<rect x="529" y="136" width="1" height="1"/>
<rect x="529" y="142" width="1" height="1"/>
<rect x="529" y="147" width="1" height="1"/>
<rect x="529" y="152" width="1" height="1"/>
<rect x="529" y="157" width="1" height="1"/>
<rect x="529" y="163" width="1" height="1"/>
<rect x="529" y="168" width="1" height="1"/>
<rect x="529" y="173" width="1" height="1"/>
<rect x="529" y="178" width="1" height="1"/>
<rect x="529" y="184" width="1" height="1"/>
<rect x="529" y="189" width="1" height="1"/>
<rect x="529" y="194" width="1" height="1"/>
<rect x="529" y="200" width="1" height="1"/>
<rect x="529" y="205" width="1" height="1"/>
<rect x="529" y="210" width="1" height="1"/>
<rect x="529" y="215" width="1" height="1"/>
<rect x="529" y="221" width="1" height="1"/>
<rect x="529" y="226" width="1" height="1"/>
<rect x="529" y="231" width="1" height="1"/>
<rect x="529" y="236" width="1" height="1"/>
<rect x="529" y="242" width="1" height="1"/>
<rect x="529" y="247" width="1" height="1"/>
<rect x="529" y="252" width="1" height="1"/>
<rect x="529" y="258" width="1" height="1"/>
<rect x="529" y="263" width="1" height="1"/>
<rect x="529" y="268" width="1" height="1"/>
<rect x="529" y="273" width="1" height="1"/>
<rect x="529" y="279" width="1" height="1"/>
<rect x="529" y="284" width="1" height="1"/>
<rect x="529" y="289" width="1" height="1"/>
<rect x="529" y="297" width="1" height="1"/>
<rect x="529" y="302" width="1" height="1"/>
<rect x="529" y="307" width="1" height="1"/>
<rect x="529" y="312" width="1" height="1"/>
<rect x="529" y="318" width="1" height="1"/>
<rect x="529" y="323" width="1" height="1"/>
<rect x="529" y="328" width="1" height="1"/>
<rect x="529" y="334" width="1" height="1"/>
<rect x="529" y="339" width="1" height="1"/>
<rect x="529" y="344" width="1" height="1"/>
<rect x="529" y="349" width="1" height="1"/>
<rect x="529" y="355" width="1" height="1"/>
<rect x="529" y="360" width="1" height="1"/>
<rect x="529" y="365" width="1" height="1"/>
<rect x="529" y="370" width="1" height="1"/>
<rect x="529" y="376" width="1" height="1"/>
<rect x="529" y="381" width="1" height="1"/>
<rect x="529" y="386" width="1" height="1"/>
<rect x="529" y="391" width="1" height="1"/>
<rect x="529" y="397" width="1" height="1"/>
<rect x="529" y="402" width="1" height="1"/>
<rect x="529" y="407" width="1" height="1"/>
<rect x="529" y="412" width="1" height="1"/>
<rect x="529" y="418" width="1" height="1"/>
<rect x="529" y="423" width="1" height="1"/>
<rect x="529" y="428" width="1" height="1"/>
<rect x="529" y="434" width="1" height="1"/>
<rect x="529" y="439" width="1" height="1"/>
<rect x="529" y="444" width="1" height="1"/>
<rect x="529" y="449" width="1" height="1"/>
<rect x="529" y="455" width="1" height="1"/>
<rect x="529" y="460" width="1" height="1"/>
<rect x="529" y="465" width="1" height="1"/>
<rect x="529" y="470" width="1" height="1"/>
<rect x="529" y="476" width="1" height="1"/>
<rect x="529" y="481" width="1" height="1"/>
<rect x="529" y="486" width="1" height="1"/>
<rect x="529" y="491" width="1" height="1"/>
<rect x="529" y="497" width="1" height="1"/>
<rect x="529" y="502" width="1" height="1"/>
<rect x="529" y="507" width="1" height="1"/>
<rect x="529" y="512" width="1" height="1"/>
<rect x="529" y="518" width="1" height="1"/>
<rect x="529" y="523" width="1" height="1"/>
<rect x="529" y="528" width="1" height="1"/>
<rect x="529" y="534" width="1" height="1"/>
<rect x="529" y="539" width="1" height="1"/>
<rect x="529" y="544" width="1" height="1"/>
<rect x="529" y="549" width="1" height="1"/>
<rect x="529" y="555" width="1" height="1"/>
<rect x="627" y="31" width="1" height="1"/>
<rect x="627" y="36" width="1" height="1"/>
<rect x="627" y="41" width="1" height="1"/>
<rect x="627" y="47" width="1" height="1"/>
<rect x="627" y="52" width="1" height="1"/>
<rect x="627" y="57" width="1" height="1"/>
<rect x="627" y="63" width="1" height="1"/>
<rect x="627" y="68" width="1" height="1"/>
<rect x="627" y="73" width="1" height="1"/>
<rect x="627" y="78" width="1" height="1"/>
<rect x="627" y="84" width="1" height="1"/>
<rect x="627" y="89" width="1" height="1"/>
<rect x="627" y="94" width="1" height="1"/>
<rect x="627" y="99" width="1" height="1"/>
<rect x="627" y="105" width="1" height="1"/>
<rect x="627" y="110" width="1" height="1"/>
<rect x="627" y="115" width="1" height="1"/>
<rect x="627" y="120" width="1" height="1"/>
<rect x="627" y="126" width="1" height="1"/>
<rect x="627" y="131" width="1" height="1"/>
<rect x="627" y="136" width="1" height="1"/>
<rect x="627" y="142" width="1" height="1"/>
<rect x="627" y="147" width="1" height="1"/>
<rect x="627" y="152" width="1" height="1"/>
<rect x="627" y="157" width="1" height="1"/>
<rect x="627" y="163" width="1" height="1"/>
<rect x="627" y="168" width="1" height="1"/>
<rect x="627" y="173" width="1" height="1"/>
<rect x="627" y="178" width="1" height="1"/>
<rect x="627" y="184" width="1" height="1"/>
<rect x="627" y="189" width="1" height="1"/>
<rect x="627" y="194" width="1" height="1"/>
<rect x="627" y="200" width="1" height="1"/>
<rect x="627" y="205" width="1" height="1"/>
<rect x="627" y="210" width="1" height="1"/>
<rect x="627" y="215" width="1" height="1"/>
<rect x="627" y="221" width="1" height="1"/>
<rect x="627" y="226" width="1" height="1"/>
<rect x="627" y="231" width="1" height="1"/>
<rect x="627" y="236" width="1" height="1"/>
<rect x="627" y="242" width="1" height="1"/>
<rect x="627" y="247" width="1" height="1"/>
<rect x="627" y="252" width="1" height="1"/>
<rect x="627" y="258" width="1" height="1"/>
<rect x="627" y="263" width="1" height="1"/>
<rect x="627" y="268" width="1" height="1"/>
<rect x="627" y="273" width="1" height="1"/>
<rect x="627" y="279" width="1" height="1"/>
<rect x="627" y="284" width="1" height="1"/>
<rect x="627" y="289" width="1" height="1"/>
<rect x="627" y="297" width="1" height="1"/>
<rect x="627" y="302" width="1" height="1"/>
<rect x="627" y="307" width="1" height="1"/>
<rect x="627" y="312" width="1" height="1"/>
<rect x="627" y="318" width="1" height="1"/>
<rect x="627" y="323" width="1" height="1"/>
<rect x="627" y="328" width="1" height="1"/>
<rect x="627" y="334" width="1" height="1"/>
<rect x="627" y="339" width="1" height="1"/>
<rect x="627" y="344" width="1" height="1"/>
<rect x="627" y="349" width="1" height="1"/>
<rect x="627" y="355" width="1" height="1"/>
<rect x="627" y="360" width="1" height="1"/>
<rect x="627" y="365" width="1" height="1"/>
<rect x="627" y="370" width="1" height="1"/>
<rect x="627" y="376" width="1" height="1"/>
<rect x="627" y="381" width="1" height="1"/>
<rect x="627" y="386" width="1" height="1"/>
<rect x="627" y="391" width="1" height="1"/>
<rect x="627" y="397" width="1" height="1"/>
<rect x="627" y="402" width="1" height="1"/>
<rect x="627" y="407" width="1" height="1"/>
<rect x="627" y="412" width="1" height="1"/>
<rect x="627" y="418" width="1" height="1"/>
<rect x="627" y="423" width="1" height="1"/>
<rect x="627" y="428" width="1" height="1"/>
<rect x="627" y="434" width="1" height="1"/>
<rect x="627" y="439" width="1" height="1"/>
<rect x="627" y="444" width="1" height="1"/>
<rect x="627" y="449" width="1" height="1"/>
<rect x="627" y="455" width="1" height="1"/>
<rect x="627" y="460" width="1" height="1"/>
<rect x="627" y="465" width="1" height="1"/>
<rect x="627" y="470" width="1" height="1"/>
<rect x="627" y="476" width="1" height="1"/>
<rect x="627" y="481" width="1" height="1"/>
<rect x="627" y="486" width="1" height="1"/>
<rect x="627" y="491" width="1" height="1"/>
<rect x="627" y="497" width="1" height="1"/>
<rect x="627" y="502" width="1" height="1"/>
<rect x="627" y="507" width="1" height="1"/>
<rect x="627" y="512" width="1" height="1"/>
<rect x="627" y="518" width="1" height="1"/>
<rect x="627" y="523" width="1" height="1"/>
<rect x="627" y="528" width="1" height="1"/>
<rect x="627" y="534" width="1" height="1"/>
<rect x="627" y="539" width="1" height="1"/>
<rect x="627" y="544" width="1" height="1"/>
<rect x="627" y="549" width="1" height="1"/>
<rect x="627" y="555" width="1" height="1"/>
<rect x="725" y="31" width="1" height="1"/>
<rect x="725" y="36" width="1" height="1"/>
<rect x="725" y="41" width="1" height="1"/>
<rect x="725" y="47" width="1" height="1"/>
<rect x="725" y="52" width="1" height="1"/>
<rect x="725" y="57" width="1" height="1"/>
<rect x="725" y="63" width="1" height="1"/>
<rect x="725" y="68" width="1" height="1"/>
<rect x="725" y="73" width="1" height="1"/>
<rect x="725" y="78" width="1" height="1"/>
<rect x="725" y="84" width="1" height="1"/>
<rect x="725" y="89" width="1" height="1"/>
<rect x="725" y="94" width="1" height="1"/>
<rect x="725" y="99" width="1" height="1"/>
<rect x="725" y="105" width="1" height="1"/>
<rect x="725" y="110" width="1" height="1"/>
<rect x="725" y="115" width="1" height="1"/>
<rect x="725" y="120" width="1" height="1"/>
<rect x="725" y="126" width="1" height="1"/>
<rect x="725" y="131" width="1" height="1"/>
<rect x="725" y="136" width="1" height="1"/>
<rect x="725" y="142" width="1" height="1"/>
<rect x="725" y="147" width="1" height="1"/>
<rect x="725" y="152" width="1" height="1"/>
<rect x="725" y="157" width="1" height="1"/>
<rect x="725" y="163" width="1" height="1"/>
<rect x="725" y="168" width="1" height="1"/>
<rect x="725" y="173" width="1" height="1"/>
<rect x="725" y="178" width="1" height="1"/>
<rect x="725" y="184" width="1" height="1"/>
<rect x="725" y="189" width="1" height="1"/>
<rect x="725" y="194" width="1" height="1"/>
<rect x="725" y="200" width="1" height="1"/>
<rect x="725" y="205" width="1" height="1"/>
<rect x="725" y="210" width="1" height="1"/>
<rect x="725" y="215" width="1" height="1"/>
<rect x="725" y="221" width="1" height="1"/>
<rect x="725" y="226" width="1" height="1"/>
<rect x="725" y="231" width="1" height="1"/>
<rect x="725" y="236" width="1" height="1"/>
<rect x="725" y="242" width="1" height="1"/>
<rect x="725" y="247" width="1" height="1"/>
<rect x="725" y="252" width="1" height="1"/>
<rect x="725" y="258" width="1" height="1"/>
<rect x="725" y="263" width="1" height="1"/>
<rect x="725" y="268" width="1" height="1"/>
<rect x="725" y="273" width="1" height="1"/>
<rect x="725" y="279" width="1" height="1"/>
<rect x="725" y="284" width="1" height="1"/>
<rect x="725" y="289" width="1" height="1"/>
<rect x="725" y="297" width="1" height="1"/>
<rect x="725" y="302" width="1" height="1"/>
<rect x="725" y="307" width="1" height="1"/>
<rect x="725" y="312" width="1" height="1"/>
<rect x="725" y="318" width="1" height="1"/>
<rect x="725" y="323" width="1" height="1"/>
<rect x="725" y="328" width="1" height="1"/>
<rect x="725" y="334" width="1" height="1"/>
<rect x="725" y="339" width="1" height="1"/>
<rect x="725" y="344" width="1" height="1"/>
<rect x="725" y="349" width="1" height="1"/>
<rect x="725" y="355" width="1" height="1"/>
<rect x="725" y="360" width="1" height="1"/>
<rect x="725" y="365" width="1" height="1"/>
<rect x="725" y="370" width="1" height="1"/>
<rect x="725" y="376" width="1" height="1"/>
<rect x="725" y="381" width="1" height="1"/>
<rect x="725" y="386" width="1" height="1"/>
<rect x="725" y="391" width="1" height="1"/>
<rect x="725" y="397" width="1" height="1"/>
<rect x="725" y="402" width="1" height="1"/>
<rect x="725" y="407" width="1" height="1"/>
<rect x="725" y="412" width="1" height="1"/>
<rect x="725" y="418" width="1" height="1"/>
<rect x="725" y="423" width="1" height="1"/>
<rect x="725" y="428" width="1" height="1"/>
<rect x="725" y="434" width="1" height="1"/>
<rect x="725" y="439" width="1" height="1"/>
<rect x="725" y="444" width="1" height="1"/>
<rect x="725" y="449" width="1" height="1"/>
<rect x="725" y="455" width="1" height="1"/>
<rect x="725" y="460" width="1" height="1"/>
<rect x="725" y="465" width="1" height="1"/>
<rect x="725" y="470" width="1" height="1"/>
<rect x="725" y="476" width="1" height="1"/>
<rect x="725" y="481" width="1" height="1"/>
<rect x="725" y="486" width="1" height="1"/>
<rect x="725" y="491" width="1" height="1"/>
<rect x="725" y="497" width="1" height="1"/>
<rect x="725" y="502" width="1" height="1"/>
<rect x="725" y="507" width="1" height="1"/>
<rect x="725" y="512" width="1" height="1"/>
<rect x="725" y="518" width="1" height="1"/>
<rect x="725" y="523" width="1" height="1"/>
<rect x="725" y="528" width="1" height="1"/>
<rect x="725" y="534" width="1" height="1"/>
<rect x="725" y="539" width="1" height="1"/>
<rect x="725" y="544" width="1" height="1"/>
<rect x="725" y="549" width="1" height="1"/>
<rect x="725" y="555" width="1" height="1"/>
<rect x="822" y="31" width="1" height="1"/>
<rect x="822" y="36" width="1" height="1"/>
<rect x="822" y="41" width="1" height="1"/>
<rect x="822" y="47" width="1" height="1"/>
<rect x="822" y="52" width="1" height="1"/>
<rect x="822" y="57" width="1" height="1"/>
<rect x="822" y="63" width="1" height="1"/>
<rect x="822" y="68" width="1" height="1"/>
<rect x="822" y="73" width="1" height="1"/>
<rect x="822" y="78" width="1" height="1"/>
<rect x="822" y="84" width="1" height="1"/>
<rect x="822" y="89" width="1" height="1"/>
<rect x="822" y="94" width="1" height="1"/>
<rect x="822" y="99" width="1" height="1"/>
<rect x="822" y="105" width="1" height="1"/>
<rect x="822" y="110" width="1" height="1"/>
<rect x="822" y="115" width="1" height="1"/>
<rect x="822" y="120" width="1" height="1"/>
<rect x="822" y="126" width="1" height="1"/>
<rect x="822" y="131" width="1" height="1"/>
<rect x="822" y="136" width="1" height="1"/>
<rect x="822" y="142" width="1" height="1"/>
<rect x="822" y="147" width="1" height="1"/>
<rect x="822" y="152" width="1" height="1"/>
<rect x="822" y="157" width="1" height="1"/>
<rect x="822" y="163" width="1" height="1"/>
<rect x="822" y="168" width="1" height="1"/>
<rect x="822" y="173" width="1" height="1"/>
<rect x="822" y="178" width="1" height="1"/>
<rect x="822" y="184" width="1" height="1"/>
<rect x="822" y="189" width="1" height="1"/>
<rect x="822" y="194" width="1" height="1"/>
<rect x="822" y="200" width="1" height="1"/>
<rect x="822" y="205" width="1" height="1"/>
<rect x="822" y="210" width="1" height="1"/>
<rect x="822" y="215" width="1" height="1"/>
<rect x="822" y="221" width="1" height="1"/>
<rect x="822" y="226" width="1" height="1"/>
<rect x="822" y="231" width="1" height="1"/>
<rect x="822" y="236" width="1" height="1"/>
<rect x="822" y="242" width="1" height="1"/>
<rect x="822" y="247" width="1" height="1"/>
<rect x="822" y="252" width="1" height="1"/>
<rect x="822" y="258" width="1" height="1"/>
<rect x="822" y="263" width="1" height="1"/>
<rect x="822" y="268" width="1" height="1"/>
<rect x="822" y="273" width="1" height="1"/>
<rect x="822" y="279" width="1" height="1"/>
<rect x="822" y="284" width="1" height="1"/>
<rect x="822" y="289" width="1" height="1"/>
<rect x="822" y="297" width="1" height="1"/>
<rect x="822" y="302" width="1" height="1"/>
<rect x="822" y="307" width="1" height="1"/>
<rect x="822" y="312" width="1" height="1"/>
<rect x="822" y="318" width="1" height="1"/>
<rect x="822" y="323" width="1" height="1"/>
<rect x="822" y="328" width="1" height="1"/>
<rect x="822" y="334" width="1" height="1"/>
<rect x="822" y="339" width="1" height="1"/>
<rect x="822" y="344" width="1" height="1"/>
<rect x="822" y="349" width="1" height="1"/>
<rect x="822" y="355" width="1" height="1"/>
<rect x="822" y="360" width="1" height="1"/>
<rect x="822" y="365" width="1" height="1"/>
<rect x="822" y="370" width="1" height="1"/>
<rect x="822" y="376" width="1" height="1"/>
<rect x="822" y="381" width="1" height="1"/>
<rect x="822" y="386" width="1" height="1"/>
<rect x="822" y="391" width="1" height="1"/>
<rect x="822" y="397" width="1" height="1"/>
<rect x="822" y="402" width="1" height="1"/>
<rect x="822" y="407" width="1" height="1"/>
<rect x="822" y="412" width="1" height="1"/>
<rect x="822" y="418" width="1" height="1"/>
<rect x="822" y="423" width="1" height="1"/>
<rect x="822" y="428" width="1" height="1"/>
<rect x="822" y="434" width="1" height="1"/>
<rect x="822" y="439" width="1" height="1"/>
<rect x="822" y="444" width="1" height="1"/>
<rect x="822" y="449" width="1" height="1"/>
<rect x="822" y="455" width="1" height="1"/>
<rect x="822" y="460" width="1" height="1"/>
<rect x="822" y="465" width="1" height="1"/>
<rect x="822" y="470" width="1" height="1"/>
<rect x="822" y="476" width="1" height="1"/>
<rect x="822" y="481" width="1" height="1"/>
<rect x="822" y="486" width="1" height="1"/>
<rect x="822" y="491" width="1" height="1"/>
<rect x="822" y="497" width="1" height="1"/>
<rect x="822" y="502" width="1" height="1"/>
<rect x="822" y="507" width="1" height="1"/>
<rect x="822" y="512" width="1" height="1"/>
<rect x="822" y="518" width="1" height="1"/>
<rect x="822" y="523" width="1" height="1"/>
<rect x="822" y="528" width="1" height="1"/>
<rect x="822" y="534" width="1" height="1"/>
<rect x="822" y="539" width="1" height="1"/>
<rect x="822" y="544" width="1" height="1"/>
<rect x="822" y="549" width="1" height="1"/>
<rect x="822" y="555" width="1" height="1"/>
<rect x="920" y="31" width="1" height="1"/>
<rect x="920" y="36" width="1" height="1"/>
<rect x="920" y="41" width="1" height="1"/>
<rect x="920" y="47" width="1" height="1"/>
<rect x="920" y="52" width="1" height="1"/>
<rect x="920" y="57" width="1" height="1"/>
<rect x="920" y="63" width="1" height="1"/>
<rect x="920" y="68" width="1" height="1"/>
<rect x="920" y="73" width="1" height="1"/>
<rect x="920" y="78" width="1" height="1"/>
<rect x="920" y="84" width="1" height="1"/>
<rect x="920" y="89" width="1" height="1"/>
<rect x="920" y="94" width="1" height="1"/>
<rect x="920" y="99" width="1" height="1"/>
<rect x="920" y="105" width="1" height="1"/>
<rect x="920" y="110" width="1" height="1"/>
<rect x="920" y="115" width="1" height="1"/>
<rect x="920" y="120" width="1" height="1"/>
<rect x="920" y="126" width="1" height="1"/>
<rect x="920" y="131" width="1" height="1"/>
<rect x="920" y="136" width="1" height="1"/>
<rect x="920" y="142" width="1" height="1"/>
<rect x="920" y="147" width="1" height="1"/>
<rect x="920" y="152" width="1" height="1"/>
<rect x="920" y="157" width="1" height="1"/>
<rect x="920" y="163" width="1" height="1"/>
<rect x="920" y="168" width="1" height="1"/>
<rect x="920" y="173" width="1" height="1"/>
<rect x="920" y="178" width="1" height="1"/>
<rect x="920" y="184" width="1" height="1"/>
<rect x="920" y="189" width="1" height="1"/>
<rect x="920" y="194" width="1" height="1"/>
<rect x="920" y="200" width="1" height="1"/>
<rect x="920" y="205" width="1" height="1"/>
<rect x="920" y="210" width="1" height="1"/>
<rect x="920" y="215" width="1" height="1"/>
<rect x="920" y="221" width="1" height="1"/>
<rect x="920" y="226" width="1" height="1"/>
<rect x="920" y="231" width="1" height="1"/>
<rect x="920" y="236" width="1" height="1"/>
<rect x="920" y="242" width="1" height="1"/>
<rect x="920" y="247" width="1" height="1"/>
<rect x="920" y="252" width="1" height="1"/>
<rect x="920" y="258" width="1" height="1"/>
<rect x="920" y="263" width="1" height="1"/>
<rect x="920" y="268" width="1" height="1"/>
<rect x="920" y="273" width="1" height="1"/>
<rect x="920" y="279" width="1" height="1"/>
<rect x="920" y="284" width="1" height="1"/>
<rect x="920" y="289" width="1" height="1"/>
<rect x="920" y="297" width="1" height="1"/>
<rect x="920" y="302" width="1" height="1"/>
<rect x="920" y="307" width="1" height="1"/>
<rect x="920" y="312" width="1" height="1"/>
<rect x="920" y="318" width="1" height="1"/>
<rect x="920" y="323" width="1" height="1"/>
<rect x="920" y="328" width="1" height="1"/>
<rect x="920" y="334" width="1" height="1"/>
<rect x="920" y="339" width="1" height="1"/>
<rect x="920" y="344" width="1" height="1"/>
<rect x="920" y="349" width="1" height="1"/>
<rect x="920" y="355" width="1" height="1"/>
<rect x="920" y="360" width="1" height="1"/>
<rect x="920" y="365" width="1" height="1"/>
<rect x="920" y="370" width="1" height="1"/>
<rect x="920" y="376" width="1" height="1"/>
<rect x="920" y="381" width="1" height="1"/>
<rect x="920" y="386" width="1" height="1"/>
<rect x="920" y="391" width="1" height="1"/>
<rect x="920" y="397" width="1" height="1"/>
<rect x="920" y="402" width="1" height="1"/>
<rect x="920" y="407" width="1" height="1"/>
<rect x="920" y="412" width="1" height="1"/>
<rect x="920" y="418" width="1" height="1"/>
<rect x="920" y="423" width="1" height="1"/>
<rect x="920" y="428" width="1" height="1"/>
<rect x="920" y="434" width="1" height="1"/>
<rect x="920" y="439" width="1" height="1"/>
<rect x="920" y="444" width="1" height="1"/>
<rect x="920" y="449" width="1" height="1"/>
<rect x="920" y="455" width="1" height="1"/>
<rect x="920" y="460" width="1" height="1"/>
<rect x="920" y="465" width="1" height="1"/>
<rect x="920" y="470" width="1" height="1"/>
<rect x="920" y="476" width="1" height="1"/>
<rect x="920" y="481" width="1" height="1"/>
<rect x="920" y="486" width="1" height="1"/>
<rect x="920" y="491" width="1" height="1"/>
<rect x="920" y="497" width="1" height="1"/>
<rect x="920" y="502" width="1" height="1"/>
<rect x="920" y="507" width="1" height="1"/>
<rect x="920" y="512" width="1" height="1"/>
<rect x="920" y="518" width="1" height="1"/>
<rect x="920" y="523" width="1" height="1"/>
<rect x="920" y="528" width="1" height="1"/>
<rect x="920" y="534" width="1" height="1"/>
<rect x="920" y="539" width="1" height="1"/>
<rect x="920" y="544" width="1" height="1"/>
<rect x="920" y="549" width="1" height="1"/>
<rect x="920" y="555" width="1" height="1"/>
</g>
<line x1="2" y1="294.5" x2="979" y2="294.5" stroke="#666666" stroke-width="1"/>
<text x="40.4" y="291" font-size="8" fill="#b4b4b4" text-anchor="middle" font-family="Liberation Sans">-6 s</text>
<text x="138.2" y="291" font-size="8" fill="#b4b4b4" text-anchor="middle" font-family="Liberation Sans">-5 s</text>
<text x="236.0" y="291" font-size="8" fill="#b4b4b4" text-anchor="middle" font-family="Liberation Sans">-4 s</text>
<text x="333.8" y="291" font-size="8" fill="#b4b4b4" text-anchor="middle" font-family="Liberation Sans">-3 s</text>
<text x="431.6" y="291" font-size="8" fill="#b4b4b4" text-anchor="middle" font-family="Liberation Sans">-2 s</text>
<text x="529.4" y="291" font-size="8" fill="#b4b4b4" text-anchor="middle" font-family="Liberation Sans">-1 s</text>
<text x="627.2" y="291" font-size="8" fill="#b4b4b4" text-anchor="middle" font-family="Liberation Sans">0 s</text>
<text x="725.0" y="291" font-size="8" fill="#b4b4b4" text-anchor="middle" font-family="Liberation Sans">1 s</text>
<text x="822.8" y="291" font-size="8" fill="#b4b4b4" text-anchor="middle" font-family="Liberation Sans">2 s</text>
<text x="920.6" y="291" font-size="8" fill="#b4b4b4" text-anchor="middle" font-family="Liberation Sans">3 s</text>
<text x="976.3" y="60.1" font-size="7.5" fill="#d4c828" stroke="#d4c828" stroke-width="0.2" text-anchor="end" font-family="Liberation Sans">600 mV</text>
<text x="976.3" y="86.5" font-size="7.5" fill="#d4c828" stroke="#d4c828" stroke-width="0.2" text-anchor="end" font-family="Liberation Sans">500 mV</text>
<text x="976.3" y="112.9" font-size="7.5" fill="#d4c828" stroke="#d4c828" stroke-width="0.2" text-anchor="end" font-family="Liberation Sans">400 mV</text>
<text x="976.3" y="139.2" font-size="7.5" fill="#d4c828" stroke="#d4c828" stroke-width="0.2" text-anchor="end" font-family="Liberation Sans">300 mV</text>
<text x="976.3" y="165.5" font-size="7.5" fill="#d4c828" stroke="#d4c828" stroke-width="0.2" text-anchor="end" font-family="Liberation Sans">200 mV</text>
<text x="976.3" y="191.9" font-size="7.5" fill="#d4c828" stroke="#d4c828" stroke-width="0.2" text-anchor="end" font-family="Liberation Sans">100 mV</text>
<text x="976.3" y="244.6" font-size="7.5" fill="#d4c828" stroke="#d4c828" stroke-width="0.2" text-anchor="end" font-family="Liberation Sans">-100 mV</text>
<text x="976.3" y="271.0" font-size="7.5" fill="#d4c828" stroke="#d4c828" stroke-width="0.2" text-anchor="end" font-family="Liberation Sans">-200 mV</text>
<text x="976.3" y="310.1" font-size="7.5" fill="#28b0bc" stroke="#28b0bc" stroke-width="0.2" text-anchor="end" font-family="Liberation Sans">400 mV</text>
<text x="976.3" y="336.4" font-size="7.5" fill="#28b0bc" stroke="#28b0bc" stroke-width="0.2" text-anchor="end" font-family="Liberation Sans">300 mV</text>
<text x="976.3" y="362.7" font-size="7.5" fill="#28b0bc" stroke="#28b0bc" stroke-width="0.2" text-anchor="end" font-family="Liberation Sans">200 mV</text>
<text x="976.3" y="389.1" font-size="7.5" fill="#28b0bc" stroke="#28b0bc" stroke-width="0.2" text-anchor="end" font-family="Liberation Sans">100 mV</text>
<text x="976.3" y="415.4" font-size="7.5" fill="#28b0bc" stroke="#28b0bc" stroke-width="0.2" text-anchor="end" font-family="Liberation Sans">0 V</text>
<text x="976.3" y="441.7" font-size="7.5" fill="#28b0bc" stroke="#28b0bc" stroke-width="0.2" text-anchor="end" font-family="Liberation Sans">-100 mV</text>
<text x="976.3" y="468.0" font-size="7.5" fill="#28b0bc" stroke="#28b0bc" stroke-width="0.2" text-anchor="end" font-family="Liberation Sans">-200 mV</text>
<text x="976.3" y="494.3" font-size="7.5" fill="#28b0bc" stroke="#28b0bc" stroke-width="0.2" text-anchor="end" font-family="Liberation Sans">-300 mV</text>
<text x="976.3" y="520.7" font-size="7.5" fill="#28b0bc" stroke="#28b0bc" stroke-width="0.2" text-anchor="end" font-family="Liberation Sans">-400 mV</text>
<text x="976.3" y="547.0" font-size="7.5" fill="#28b0bc" stroke="#28b0bc" stroke-width="0.2" text-anchor="end" font-family="Liberation Sans">-500 mV</text>
<rect x="314" y="31" width="1" height="263" fill="#8c8c8c"/>
<rect x="314" y="295" width="1" height="263" fill="#444444"/>
<rect x="660" y="31" width="1" height="263" fill="#8c8c8c"/>
<rect x="660" y="295" width="1" height="263" fill="#444444"/>
<g>
<rect x="315" y="114" width="1" height="101" fill="#111000"/>
<rect x="316" y="114" width="1" height="101" fill="#615a00"/>
<rect x="317" y="114" width="1" height="101" fill="#5e5700"/>
<rect x="318" y="114" width="1" height="101" fill="#5a5300"/>
<rect x="319" y="114" width="1" height="101" fill="#615a00"/>
<rect x="320" y="114" width="1" height="101" fill="#4b4500"/>
<rect x="321" y="114" width="2" height="101" fill="#504a00"/>
<rect x="323" y="114" width="1" height="101" fill="#474100"/>
<rect x="324" y="114" width="1" height="101" fill="#504a00"/>
<rect x="325" y="114" width="1" height="101" fill="#474100"/>
<rect x="326" y="114" width="1" height="101" fill="#4b4500"/>
<rect x="327" y="114" width="1" height="101" fill="#111000"/>
<rect x="328" y="114" width="2" height="101" fill="#5e5700"/>
<rect x="330" y="114" width="1" height="101" fill="#615a00"/>
<rect x="331" y="114" width="1" height="101" fill="#5a5300"/>
<rect x="332" y="114" width="2" height="101" fill="#504a00"/>
<rect x="334" y="114" width="2" height="101" fill="#4b4500"/>
<rect x="336" y="114" width="1" height="101" fill="#504a00"/>
<rect x="337" y="114" width="1" height="101" fill="#474100"/>
<rect x="338" y="114" width="1" height="101" fill="#111000"/>
<rect x="339" y="114" width="1" height="101" fill="#5e5700"/>
<rect x="340" y="114" width="1" height="101" fill="#615a00"/>
<rect x="341" y="114" width="1" height="101" fill="#5a5300"/>
<rect x="342" y="114" width="1" height="101" fill="#615a00"/>
<rect x="343" y="114" width="1" height="101" fill="#474100"/>
<rect x="344" y="114" width="1" height="101" fill="#504a00"/>
<rect x="345" y="114" width="2" height="101" fill="#474100"/>
<rect x="347" y="114" width="1" height="101" fill="#504a00"/>
<rect x="348" y="114" width="1" height="101" fill="#474100"/>
<rect x="349" y="114" width="1" height="101" fill="#111000"/>
<rect x="350" y="114" width="1" height="101" fill="#5e5700"/>
<rect x="351" y="114" width="2" height="101" fill="#5a5300"/>
<rect x="353" y="114" width="1" height="101" fill="#615a00"/>
<rect x="354" y="114" width="1" height="101" fill="#504a00"/>
<rect x="355" y="114" width="1" height="101" fill="#4b4500"/>
<rect x="356" y="114" width="1" height="101" fill="#504a00"/>
<rect x="357" y="114" width="2" height="101" fill="#4b4500"/>
<rect x="359" y="114" width="1" height="101" fill="#504a00"/>
<rect x="360" y="114" width="1" height="101" fill="#5a5300"/>
<rect x="361" y="114" width="1" height="101" fill="#5e5700"/>
<rect x="362" y="114" width="1" height="101" fill="#5a5300"/>
<rect x="363" y="114" width="2" height="101" fill="#5e5700"/>
<rect x="365" y="114" width="1" height="101" fill="#474100"/>
<rect x="366" y="114" width="1" height="101" fill="#4b4500"/>
<rect x="367" y="114" width="1" height="101" fill="#474100"/>
<rect x="368" y="114" width="1" height="101" fill="#4b4500"/>
<rect x="369" y="114" width="1" height="101" fill="#504a00"/>
<rect x="370" y="114" width="1" height="101" fill="#4b4500"/>
<rect x="371" y="114" width="2" height="101" fill="#5a5300"/>
<rect x="373" y="114" width="1" height="101" fill="#615a00"/>
<rect x="374" y="114" width="1" height="101" fill="#5a5300"/>
<rect x="375" y="114" width="1" height="101" fill="#615a00"/>
<rect x="376" y="114" width="1" height="101" fill="#4b4500"/>
<rect x="377" y="114" width="2" height="101" fill="#504a00"/>
<rect x="379" y="114" width="1" height="101" fill="#4b4500"/>
<rect x="380" y="114" width="1" height="101" fill="#504a00"/>
<rect x="381" y="114" width="1" height="101" fill="#474100"/>
<rect x="382" y="114" width="1" height="101" fill="#615a00"/>
<rect x="383" y="114" width="1" height="101" fill="#5e5700"/>
<rect x="384" y="114" width="1" height="101" fill="#5a5300"/>
<rect x="385" y="114" width="2" height="101" fill="#615a00"/>
<rect x="387" y="114" width="1" height="101" fill="#504a00"/>
<rect x="388" y="114" width="1" height="101" fill="#474100"/>
<rect x="389" y="114" width="1" height="101" fill="#504a00"/>
<rect x="390" y="114" width="1" height="101" fill="#4b4500"/>
<rect x="391" y="114" width="2" height="101" fill="#504a00"/>
<rect x="393" y="114" width="1" height="101" fill="#111000"/>
<rect x="394" y="114" width="2" height="101" fill="#615a00"/>
<rect x="396" y="114" width="1" height="101" fill="#5e5700"/>
<rect x="397" y="114" width="1" height="101" fill="#615a00"/>
<rect x="398" y="114" width="1" height="101" fill="#504a00"/>
<rect x="399" y="114" width="2" height="101" fill="#4b4500"/>
<rect x="401" y="114" width="2" height="101" fill="#474100"/>
<rect x="403" y="114" width="1" height="101" fill="#4b4500"/>
<rect x="404" y="114" width="1" height="101" fill="#5a5300"/>
<rect x="405" y="114" width="1" height="101" fill="#5e5700"/>
<rect x="406" y="114" width="1" height="101" fill="#5a5300"/>
<rect x="407" y="114" width="1" height="101" fill="#5e5700"/>
<rect x="408" y="114" width="1" height="101" fill="#5a5300"/>
<rect x="409" y="114" width="2" height="101" fill="#474100"/>
<rect x="411" y="114" width="3" height="101" fill="#4b4500"/>
<rect x="414" y="114" width="1" height="101" fill="#474100"/>
<rect x="415" y="114" width="1" height="101" fill="#111000"/>
<rect x="416" y="114" width="1" height="101" fill="#615a00"/>
<rect x="417" y="114" width="1" height="101" fill="#5e5700"/>
<rect x="418" y="114" width="1" height="101" fill="#5a5300"/>
<rect x="419" y="114" width="1" height="101" fill="#615a00"/>
<rect x="420" y="114" width="1" height="101" fill="#504a00"/>
<rect x="421" y="114" width="1" height="101" fill="#4b4500"/>
<rect x="422" y="114" width="1" height="101" fill="#504a00"/>
<rect x="423" y="114" width="1" height="101" fill="#4b4500"/>
<rect x="424" y="114" width="1" height="101" fill="#504a00"/>
<rect x="425" y="114" width="1" height="101" fill="#474100"/>
<rect x="426" y="114" width="1" height="101" fill="#5a5300"/>
<rect x="427" y="114" width="3" height="101" fill="#5e5700"/>
<rect x="430" y="114" width="1" height="101" fill="#615a00"/>
<rect x="431" y="114" width="1" height="101" fill="#504a00"/>
<rect x="432" y="114" width="2" height="101" fill="#474100"/>
<rect x="434" y="114" width="2" height="101" fill="#4b4500"/>
<rect x="436" y="114" width="1" height="101" fill="#504a00"/>
<rect x="437" y="114" width="1" height="101" fill="#4b4500"/>
<rect x="438" y="114" width="1" height="101" fill="#111000"/>
<rect x="439" y="114" width="1" height="101" fill="#5e5700"/>
<rect x="440" y="114" width="3" height="101" fill="#5a5300"/>
<rect x="443" y="114" width="1" height="101" fill="#474100"/>
<rect x="444" y="114" width="3" height="101" fill="#4b4500"/>
<rect x="447" y="114" width="1" height="101" fill="#504a00"/>
<rect x="448" y="114" width="1" height="101" fill="#4b4500"/>
<rect x="449" y="114" width="3" height="101" fill="#615a00"/>
<rect x="452" y="114" width="1" height="101" fill="#5e5700"/>
<rect x="453" y="114" width="1" height="101" fill="#615a00"/>
<rect x="454" y="114" width="1" height="101" fill="#504a00"/>
<rect x="455" y="114" width="2" height="101" fill="#4b4500"/>
<rect x="457" y="114" width="3" height="101" fill="#504a00"/>
<rect x="460" y="114" width="1" height="101" fill="#111000"/>
<rect x="461" y="114" width="3" height="101" fill="#5a5300"/>
<rect x="464" y="114" width="1" height="101" fill="#615a00"/>
<rect x="465" y="114" width="1" height="101" fill="#4b4500"/>
<rect x="466" y="114" width="1" height="101" fill="#504a00"/>
<rect x="467" y="114" width="1" height="101" fill="#4b4500"/>
<rect x="468" y="114" width="1" height="101" fill="#474100"/>
<rect x="469" y="114" width="1" height="101" fill="#4b4500"/>
<rect x="470" y="114" width="1" height="101" fill="#504a00"/>
<rect x="471" y="114" width="1" height="101" fill="#111000"/>
<rect x="472" y="114" width="1" height="101" fill="#5a5300"/>
<rect x="473" y="114" width="3" height="101" fill="#615a00"/>
<rect x="476" y="114" width="2" height="101" fill="#474100"/>
<rect x="478" y="114" width="2" height="101" fill="#504a00"/>
<rect x="480" y="114" width="2" height="101" fill="#4b4500"/>
<rect x="482" y="114" width="1" height="101" fill="#111000"/>
<rect x="483" y="114" width="1" height="101" fill="#5a5300"/>
<rect x="484" y="114" width="2" height="101" fill="#615a00"/>
<rect x="486" y="114" width="1" height="101" fill="#5a5300"/>
<rect x="487" y="114" width="1" height="101" fill="#504a00"/>
<rect x="488" y="114" width="1" height="101" fill="#4b4500"/>
<rect x="489" y="114" width="1" height="101" fill="#474100"/>
<rect x="490" y="114" width="1" height="101" fill="#504a00"/>
<rect x="491" y="114" width="1" height="101" fill="#474100"/>
<rect x="492" y="114" width="1" height="101" fill="#504a00"/>
<rect x="493" y="114" width="1" height="101" fill="#111000"/>
<rect x="494" y="114" width="2" height="101" fill="#5a5300"/>
<rect x="496" y="114" width="1" height="101" fill="#615a00"/>
<rect x="497" y="114" width="1" height="101" fill="#5a5300"/>
<rect x="498" y="114" width="1" height="101" fill="#4b4500"/>
<rect x="499" y="114" width="2" height="101" fill="#504a00"/>
<rect x="501" y="114" width="1" height="101" fill="#4b4500"/>
<rect x="502" y="114" width="1" height="101" fill="#474100"/>
<rect x="503" y="114" width="1" height="101" fill="#4b4500"/>
<rect x="504" y="114" width="1" height="101" fill="#111000"/>
<rect x="505" y="114" width="1" height="101" fill="#5a5300"/>
<rect x="506" y="114" width="1" height="101" fill="#615a00"/>
<rect x="507" y="114" width="2" height="101" fill="#5a5300"/>
<rect x="509" y="114" width="1" height="101" fill="#4b4500"/>
<rect x="510" y="114" width="2" height="101" fill="#474100"/>
<rect x="512" y="114" width="3" height="101" fill="#504a00"/>
<rect x="515" y="114" width="1" height="101" fill="#111000"/>
<rect x="516" y="114" width="1" height="101" fill="#615a00"/>
<rect x="517" y="114" width="1" height="101" fill="#5e5700"/>
<rect x="518" y="114" width="1" height="101" fill="#615a00"/>
<rect x="519" y="114" width="1" height="101" fill="#5a5300"/>
<rect x="520" y="114" width="1" height="101" fill="#474100"/>
<rect x="521" y="114" width="1" height="101" fill="#4b4500"/>
<rect x="522" y="114" width="1" height="101" fill="#474100"/>
<rect x="523" y="114" width="1" height="101" fill="#504a00"/>
<rect x="524" y="114" width="1" height="101" fill="#4b4500"/>
<rect x="525" y="114" width="1" height="101" fill="#504a00"/>
<rect x="526" y="114" width="1" height="101" fill="#5e5700"/>
<rect x="527" y="114" width="1" height="101" fill="#615a00"/>
<rect x="528" y="114" width="2" height="101" fill="#5a5300"/>
<rect x="530" y="114" width="1" height="101" fill="#615a00"/>
<rect x="531" y="114" width="1" height="101" fill="#474100"/>
<rect x="532" y="114" width="1" height="101" fill="#4b4500"/>
<rect x="533" y="114" width="2" height="101" fill="#474100"/>
<rect x="535" y="114" width="1" height="101" fill="#4b4500"/>
<rect x="536" y="114" width="1" height="101" fill="#504a00"/>
<rect x="537" y="114" width="1" height="101" fill="#615a00"/>
<rect x="538" y="114" width="2" height="101" fill="#5a5300"/>
<rect x="540" y="114" width="2" height="101" fill="#5e5700"/>
<rect x="542" y="114" width="1" height="101" fill="#474100"/>
<rect x="543" y="114" width="1" height="101" fill="#504a00"/>
<rect x="544" y="114" width="1" height="101" fill="#474100"/>
<rect x="545" y="114" width="1" height="101" fill="#4b4500"/>
<rect x="546" y="114" width="1" height="101" fill="#504a00"/>
<rect x="547" y="114" width="1" height="101" fill="#474100"/>
<rect x="548" y="114" width="1" height="101" fill="#4b4500"/>
<rect x="549" y="114" width="1" height="101" fill="#111000"/>
<rect x="550" y="114" width="1" height="101" fill="#615a00"/>
<rect x="551" y="114" width="1" height="101" fill="#5e5700"/>
<rect x="552" y="114" width="1" height="101" fill="#615a00"/>
<rect x="553" y="114" width="1" height="101" fill="#5a5300"/>
<rect x="554" y="114" width="1" height="101" fill="#504a00"/>
<rect x="555" y="114" width="1" height="101" fill="#474100"/>
<rect x="556" y="114" width="2" height="101" fill="#4b4500"/>
<rect x="558" y="114" width="1" height="101" fill="#504a00"/>
<rect x="559" y="114" width="1" height="101" fill="#4b4500"/>
<rect x="560" y="114" width="1" height="101" fill="#111000"/>
<rect x="561" y="114" width="1" height="101" fill="#615a00"/>
<rect x="562" y="114" width="3" height="101" fill="#5a5300"/>
<rect x="565" y="114" width="1" height="101" fill="#504a00"/>
<rect x="566" y="114" width="1" height="101" fill="#4b4500"/>
<rect x="567" y="114" width="1" height="101" fill="#474100"/>
<rect x="568" y="114" width="1" height="101" fill="#4b4500"/>
<rect x="569" y="114" width="2" height="101" fill="#474100"/>
<rect x="571" y="114" width="1" height="101" fill="#111000"/>
<rect x="572" y="114" width="2" height="101" fill="#615a00"/>
<rect x="574" y="114" width="1" height="101" fill="#5a5300"/>
<rect x="575" y="114" width="1" height="101" fill="#615a00"/>
<rect x="576" y="114" width="1" height="101" fill="#504a00"/>
<rect x="577" y="114" width="2" height="101" fill="#474100"/>
<rect x="579" y="114" width="1" height="101" fill="#504a00"/>
<rect x="580" y="114" width="1" height="101" fill="#4b4500"/>
<rect x="581" y="114" width="1" height="101" fill="#504a00"/>
<rect x="582" y="114" width="1" height="101" fill="#5a5300"/>
<rect x="583" y="114" width="1" height="101" fill="#615a00"/>
<rect x="584" y="114" width="1" height="101" fill="#5a5300"/>
<rect x="585" y="114" width="2" height="101" fill="#5e5700"/>
<rect x="587" y="114" width="1" height="101" fill="#504a00"/>
<rect x="588" y="114" width="1" height="101" fill="#4b4500"/>
<rect x="589" y="114" width="4" height="101" fill="#474100"/>
<rect x="593" y="114" width="2" height="101" fill="#615a00"/>
<rect x="595" y="114" width="1" height="101" fill="#5e5700"/>
<rect x="596" y="114" width="1" height="101" fill="#5a5300"/>
<rect x="597" y="114" width="1" height="101" fill="#615a00"/>
<rect x="598" y="114" width="2" height="101" fill="#474100"/>
<rect x="600" y="114" width="1" height="101" fill="#4b4500"/>
<rect x="601" y="114" width="1" height="101" fill="#504a00"/>
<rect x="602" y="114" width="2" height="101" fill="#474100"/>
<rect x="604" y="114" width="1" height="101" fill="#111000"/>
<rect x="605" y="114" width="1" height="101" fill="#5e5700"/>
<rect x="606" y="114" width="1" height="101" fill="#615a00"/>
<rect x="607" y="114" width="1" height="101" fill="#5e5700"/>
<rect x="608" y="114" width="1" height="101" fill="#615a00"/>
<rect x="609" y="114" width="1" height="101" fill="#504a00"/>
<rect x="610" y="114" width="1" height="101" fill="#4b4500"/>
<rect x="611" y="114" width="1" height="101" fill="#474100"/>
<rect x="612" y="114" width="1" height="101" fill="#504a00"/>
<rect x="613" y="114" width="1" height="101" fill="#474100"/>
<rect x="614" y="114" width="1" height="101" fill="#4b4500"/>
<rect x="615" y="114" width="1" height="101" fill="#111000"/>
<rect x="616" y="114" width="1" height="101" fill="#615a00"/>
<rect x="617" y="114" width="1" height="101" fill="#5a5300"/>
<rect x="618" y="114" width="1" height="101" fill="#5e5700"/>
<rect x="619" y="114" width="1" height="101" fill="#5a5300"/>
<rect x="620" y="114" width="3" height="101" fill="#474100"/>
<rect x="623" y="114" width="1" height="101" fill="#504a00"/>
<rect x="624" y="114" width="2" height="101" fill="#474100"/>
<rect x="626" y="114" width="1" height="101" fill="#111000"/>
<rect x="627" y="114" width="1" height="101" fill="#5a5300"/>
<rect x="628" y="114" width="2" height="101" fill="#5e5700"/>
<rect x="630" y="114" width="1" height="101" fill="#5a5300"/>
<rect x="631" y="114" width="2" height="101" fill="#504a00"/>
<rect x="633" y="114" width="1" height="101" fill="#4b4500"/>
<rect x="634" y="114" width="1" height="101" fill="#474100"/>
<rect x="635" y="114" width="1" height="101" fill="#4b4500"/>
<rect x="636" y="114" width="1" height="101" fill="#474100"/>
<rect x="637" y="114" width="1" height="101" fill="#111000"/>
<rect x="638" y="114" width="2" height="101" fill="#615a00"/>
<rect x="640" y="114" width="1" height="101" fill="#5a5300"/>
<rect x="641" y="114" width="1" height="101" fill="#5e5700"/>
<rect x="642" y="114" width="2" height="101" fill="#4b4500"/>
<rect x="644" y="114" width="4" height="101" fill="#474100"/>
<rect x="648" y="114" width="1" height="101" fill="#111000"/>
<rect x="649" y="114" width="1" height="101" fill="#5e5700"/>
<rect x="650" y="114" width="1" height="101" fill="#5a5300"/>
<rect x="651" y="114" width="1" height="101" fill="#5e5700"/>
<rect x="652" y="114" width="1" height="101" fill="#615a00"/>
<rect x="653" y="114" width="1" height="101" fill="#474100"/>
<rect x="654" y="114" width="2" height="101" fill="#504a00"/>
<rect x="656" y="114" width="2" height="101" fill="#4b4500"/>
<rect x="658" y="114" width="1" height="101" fill="#474100"/>
<rect x="659" y="114" width="1" height="101" fill="#4b4500"/>
</g>
<rect x="322" y="116" width="1" height="1" fill="#8a8208"/>
<rect x="325" y="115" width="1" height="1" fill="#8a8208"/>
<rect x="326" y="114" width="1" height="1" fill="#8a8208"/>
<rect x="337" y="114" width="1" height="1" fill="#8a8208"/>
<rect x="338" y="114" width="1" height="1" fill="#8a8208"/>
<rect x="341" y="116" width="1" height="1" fill="#8a8208"/>
<rect x="348" y="116" width="1" height="1" fill="#8a8208"/>
<rect x="352" y="114" width="1" height="1" fill="#8a8208"/>
<rect x="354" y="116" width="1" height="1" fill="#8a8208"/>
<rect x="361" y="114" width="1" height="1" fill="#8a8208"/>
<rect x="363" y="115" width="1" height="1" fill="#8a8208"/>
<rect x="366" y="116" width="1" height="1" fill="#8a8208"/>
<rect x="367" y="116" width="1" height="1" fill="#8a8208"/>
<rect x="368" y="114" width="1" height="1" fill="#8a8208"/>
<rect x="369" y="114" width="1" height="1" fill="#8a8208"/>
<rect x="372" y="114" width="1" height="1" fill="#8a8208"/>
<rect x="374" y="115" width="1" height="1" fill="#8a8208"/>
<rect x="376" y="116" width="1" height="1" fill="#8a8208"/>
<rect x="377" y="116" width="1" height="1" fill="#8a8208"/>
<rect x="378" y="116" width="1" height="1" fill="#8a8208"/>
<rect x="384" y="116" width="1" height="1" fill="#8a8208"/>
<rect x="385" y="114" width="1" height="1" fill="#8a8208"/>
<rect x="386" y="115" width="1" height="1" fill="#8a8208"/>
<rect x="390" y="114" width="1" height="1" fill="#8a8208"/>
<rect x="391" y="115" width="1" height="1" fill="#8a8208"/>
<rect x="392" y="116" width="1" height="1" fill="#8a8208"/>
<rect x="393" y="115" width="1" height="1" fill="#8a8208"/>
<rect x="395" y="114" width="1" height="1" fill="#8a8208"/>
<rect x="397" y="116" width="1" height="1" fill="#8a8208"/>
<rect x="400" y="116" width="1" height="1" fill="#8a8208"/>
<rect x="404" y="114" width="1" height="1" fill="#8a8208"/>
<rect x="405" y="114" width="1" height="1" fill="#8a8208"/>
<rect x="407" y="114" width="1" height="1" fill="#8a8208"/>
<rect x="408" y="116" width="1" height="1" fill="#8a8208"/>
<rect x="410" y="115" width="1" height="1" fill="#8a8208"/>
<rect x="414" y="114" width="1" height="1" fill="#8a8208"/>
<rect x="416" y="116" width="1" height="1" fill="#8a8208"/>
<rect x="418" y="116" width="1" height="1" fill="#8a8208"/>
<rect x="423" y="115" width="1" height="1" fill="#8a8208"/>
<rect x="427" y="114" width="1" height="1" fill="#8a8208"/>
<rect x="429" y="115" width="1" height="1" fill="#8a8208"/>
<rect x="431" y="114" width="1" height="1" fill="#8a8208"/>
<rect x="432" y="116" width="1" height="1" fill="#8a8208"/>
<rect x="434" y="115" width="1" height="1" fill="#8a8208"/>
<rect x="435" y="115" width="1" height="1" fill="#8a8208"/>
<rect x="440" y="114" width="1" height="1" fill="#8a8208"/>
<rect x="444" y="114" width="1" height="1" fill="#8a8208"/>
<rect x="445" y="116" width="1" height="1" fill="#8a8208"/>
<rect x="446" y="114" width="1" height="1" fill="#8a8208"/>
<rect x="448" y="114" width="1" height="1" fill="#8a8208"/>
<rect x="449" y="116" width="1" height="1" fill="#8a8208"/>
<rect x="451" y="116" width="1" height="1" fill="#8a8208"/>
<rect x="453" y="115" width="1" height="1" fill="#8a8208"/>
<rect x="466" y="116" width="1" height="1" fill="#8a8208"/>
<rect x="467" y="115" width="1" height="1" fill="#8a8208"/>
<rect x="475" y="116" width="1" height="1" fill="#8a8208"/>
<rect x="476" y="116" width="1" height="1" fill="#8a8208"/>
<rect x="477" y="114" width="1" height="1" fill="#8a8208"/>
<rect x="478" y="116" width="1" height="1" fill="#8a8208"/>
<rect x="479" y="116" width="1" height="1" fill="#8a8208"/>
<rect x="484" y="116" width="1" height="1" fill="#8a8208"/>
<rect x="485" y="114" width="1" height="1" fill="#8a8208"/>
<rect x="487" y="115" width="1" height="1" fill="#8a8208"/>
<rect x="489" y="115" width="1" height="1" fill="#8a8208"/>
<rect x="491" y="115" width="1" height="1" fill="#8a8208"/>
<rect x="494" y="114" width="1" height="1" fill="#8a8208"/>
<rect x="497" y="114" width="1" height="1" fill="#8a8208"/>
<rect x="498" y="115" width="1" height="1" fill="#8a8208"/>
<rect x="503" y="114" width="1" height="1" fill="#8a8208"/>
<rect x="504" y="115" width="1" height="1" fill="#8a8208"/>
<rect x="505" y="114" width="1" height="1" fill="#8a8208"/>
<rect x="513" y="114" width="1" height="1" fill="#8a8208"/>
<rect x="514" y="116" width="1" height="1" fill="#8a8208"/>
<rect x="515" y="116" width="1" height="1" fill="#8a8208"/>
<rect x="516" y="115" width="1" height="1" fill="#8a8208"/>
<rect x="517" y="116" width="1" height="1" fill="#8a8208"/>
<rect x="518" y="114" width="1" height="1" fill="#8a8208"/>
<rect x="520" y="115" width="1" height="1" fill="#8a8208"/>
<rect x="521" y="114" width="1" height="1" fill="#8a8208"/>
<rect x="524" y="114" width="1" height="1" fill="#8a8208"/>
<rect x="530" y="115" width="1" height="1" fill="#8a8208"/>
<rect x="531" y="116" width="1" height="1" fill="#8a8208"/>
<rect x="532" y="115" width="1" height="1" fill="#8a8208"/>
<rect x="534" y="114" width="1" height="1" fill="#8a8208"/>
<rect x="535" y="115" width="1" height="1" fill="#8a8208"/>
<rect x="540" y="116" width="1" height="1" fill="#8a8208"/>
<rect x="542" y="116" width="1" height="1" fill="#8a8208"/>
<rect x="545" y="114" width="1" height="1" fill="#8a8208"/>
<rect x="553" y="116" width="1" height="1" fill="#8a8208"/>
<rect x="557" y="114" width="1" height="1" fill="#8a8208"/>
<rect x="563" y="116" width="1" height="1" fill="#8a8208"/>
<rect x="565" y="114" width="1" height="1" fill="#8a8208"/>
<rect x="566" y="115" width="1" height="1" fill="#8a8208"/>
<rect x="570" y="114" width="1" height="1" fill="#8a8208"/>
<rect x="572" y="116" width="1" height="1" fill="#8a8208"/>
<rect x="573" y="114" width="1" height="1" fill="#8a8208"/>
<rect x="588" y="116" width="1" height="1" fill="#8a8208"/>
<rect x="591" y="115" width="1" height="1" fill="#8a8208"/>
<rect x="595" y="114" width="1" height="1" fill="#8a8208"/>
<rect x="599" y="116" width="1" height="1" fill="#8a8208"/>
<rect x="600" y="114" width="1" height="1" fill="#8a8208"/>
<rect x="602" y="114" width="1" height="1" fill="#8a8208"/>
<rect x="609" y="116" width="1" height="1" fill="#8a8208"/>
<rect x="614" y="115" width="1" height="1" fill="#8a8208"/>
<rect x="615" y="115" width="1" height="1" fill="#8a8208"/>
<rect x="620" y="115" width="1" height="1" fill="#8a8208"/>
<rect x="623" y="114" width="1" height="1" fill="#8a8208"/>
<rect x="624" y="114" width="1" height="1" fill="#8a8208"/>
<rect x="625" y="116" width="1" height="1" fill="#8a8208"/>
<rect x="626" y="116" width="1" height="1" fill="#8a8208"/>
<rect x="629" y="116" width="1" height="1" fill="#8a8208"/>
<rect x="636" y="116" width="1" height="1" fill="#8a8208"/>
<rect x="639" y="114" width="1" height="1" fill="#8a8208"/>
<rect x="642" y="114" width="1" height="1" fill="#8a8208"/>
<rect x="646" y="116" width="1" height="1" fill="#8a8208"/>
<rect x="648" y="114" width="1" height="1" fill="#8a8208"/>
<rect x="649" y="115" width="1" height="1" fill="#8a8208"/>
<rect x="651" y="114" width="1" height="1" fill="#8a8208"/>
<rect x="653" y="114" width="1" height="1" fill="#8a8208"/>
<rect x="654" y="114" width="1" height="1" fill="#8a8208"/>
<rect x="655" y="114" width="1" height="1" fill="#8a8208"/>
<rect x="315" y="215" width="345" height="8" fill="#8c8608"/>
<rect x="315" y="221" width="345" height="2" fill="#777100"/>
<clipPath id="bc"><rect x="315" y="214" width="345" height="10"/></clipPath><g fill="none" stroke="#d4cc1c" stroke-width="1" clip-path="url(#bc)" shape-rendering="geometricPrecision">
<path d="M315.5,216.5 Q321.5,216.5 324.5,222.5"/>
<path d="M326.6,216.5 Q332.6,216.5 335.6,222.5"/>
<path d="M337.7,216.5 Q343.7,216.5 346.7,222.5"/>
<path d="M348.8,216.5 Q354.8,216.5 357.8,222.5"/>
<path d="M359.9,216.5 Q365.9,216.5 368.9,222.5"/>
<path d="M371.0,216.5 Q377.0,216.5 380.0,222.5"/>
<path d="M382.1,216.5 Q388.1,216.5 391.1,222.5"/>
<path d="M393.2,216.5 Q399.2,216.5 402.2,222.5"/>
<path d="M404.3,216.5 Q410.3,216.5 413.3,222.5"/>
<path d="M415.4,216.5 Q421.4,216.5 424.4,222.5"/>
<path d="M426.5,216.5 Q432.5,216.5 435.5,222.5"/>
<path d="M437.6,216.5 Q443.6,216.5 446.6,222.5"/>
<path d="M448.7,216.5 Q454.7,216.5 457.7,222.5"/>
<path d="M459.8,216.5 Q465.8,216.5 468.8,222.5"/>
<path d="M470.9,216.5 Q476.9,216.5 479.9,222.5"/>
<path d="M482.0,216.5 Q488.0,216.5 491.0,222.5"/>
<path d="M493.1,216.5 Q499.1,216.5 502.1,222.5"/>
<path d="M504.2,216.5 Q510.2,216.5 513.2,222.5"/>
<path d="M515.3,216.5 Q521.3,216.5 524.3,222.5"/>
<path d="M526.4,216.5 Q532.4,216.5 535.4,222.5"/>
<path d="M537.5,216.5 Q543.5,216.5 546.5,222.5"/>
<path d="M548.6,216.5 Q554.6,216.5 557.6,222.5"/>
<path d="M559.7,216.5 Q565.7,216.5 568.7,222.5"/>
<path d="M570.8,216.5 Q576.8,216.5 579.8,222.5"/>
<path d="M581.9,216.5 Q587.9,216.5 590.9,222.5"/>
<path d="M593.0,216.5 Q599.0,216.5 602.0,222.5"/>
<path d="M604.1,216.5 Q610.1,216.5 613.1,222.5"/>
<path d="M615.2,216.5 Q621.2,216.5 624.2,222.5"/>
<path d="M626.3,216.5 Q632.3,216.5 635.3,222.5"/>
<path d="M637.4,216.5 Q643.4,216.5 646.4,222.5"/>
<path d="M648.5,216.5 Q654.5,216.5 657.5,222.5"/>
<path d="M659.6,216.5 Q665.6,216.5 668.6,222.5"/>
</g>
<g shape-rendering="geometricPrecision">
<rect x="22" y="215" width="946" height="1" fill="#8c8618" shape-rendering="crispEdges"/><rect x="22" y="216" width="946" height="1" fill="#e4dc20" shape-rendering="crispEdges"/>
<path d="M283.6,216 L284.3,147 L285.1,147 L285.9,216 Z" fill="#d0c820"/>
<rect x="315" y="114" width="1" height="102" fill="#706800"/>
<rect x="659" y="114" width="2" height="109" fill="#a8a030"/>
<path d="M968.2,216 L974,210 L974,222 Z" fill="#f4ea20"/><rect x="973" y="215" width="6" height="2" fill="#f4ea20"/>
</g>
<path d="M5,209 H17 L23,216 L17,223 H5 Q4,223 4,222 V210 Q4,209 5,209 Z" fill="#f6ec28" shape-rendering="geometricPrecision"/>
<text x="13.8" y="219.3" font-size="8.5" fill="#1a1a10" text-anchor="middle" letter-spacing="1" font-family="Liberation Sans">C1</text>
<g>
<rect x="315" y="394" width="1" height="17" fill="#114f52"/>
<rect x="316" y="394" width="1" height="17" fill="#0d4447"/>
<rect x="317" y="394" width="3" height="17" fill="#114f52"/>
<rect x="320" y="394" width="1" height="17" fill="#0c3e40"/>
<rect x="321" y="394" width="1" height="17" fill="#0a3436"/>
<rect x="322" y="394" width="1" height="17" fill="#0b393b"/>
<rect x="323" y="394" width="1" height="17" fill="#0a3436"/>
<rect x="324" y="394" width="1" height="17" fill="#0c3e40"/>
<rect x="325" y="394" width="2" height="17" fill="#0a3436"/>
<rect x="327" y="394" width="1" height="17" fill="#021010"/>
<rect x="328" y="394" width="1" height="17" fill="#0d4447"/>
<rect x="329" y="394" width="1" height="17" fill="#0f4a4c"/>
<rect x="330" y="394" width="1" height="17" fill="#0d4447"/>
<rect x="331" y="394" width="1" height="17" fill="#114f52"/>
<rect x="332" y="394" width="1" height="17" fill="#0a3436"/>
<rect x="333" y="394" width="1" height="17" fill="#0c3e40"/>
<rect x="334" y="394" width="2" height="17" fill="#0a3436"/>
<rect x="336" y="394" width="1" height="17" fill="#0c3e40"/>
<rect x="337" y="394" width="1" height="17" fill="#0a3436"/>
<rect x="338" y="394" width="1" height="17" fill="#021010"/>
<rect x="339" y="394" width="1" height="17" fill="#0f4a4c"/>
<rect x="340" y="394" width="1" height="17" fill="#0d4447"/>
<rect x="341" y="394" width="2" height="17" fill="#0f4a4c"/>
<rect x="343" y="394" width="1" height="17" fill="#0a3436"/>
<rect x="344" y="394" width="2" height="17" fill="#0c3e40"/>
<rect x="346" y="394" width="1" height="17" fill="#0b393b"/>
<rect x="347" y="394" width="2" height="17" fill="#0a3436"/>
<rect x="349" y="394" width="1" height="17" fill="#021010"/>
<rect x="350" y="394" width="4" height="17" fill="#0f4a4c"/>
<rect x="354" y="394" width="1" height="17" fill="#0a3436"/>
<rect x="355" y="394" width="2" height="17" fill="#0b393b"/>
<rect x="357" y="394" width="1" height="17" fill="#0a3436"/>
<rect x="358" y="394" width="2" height="17" fill="#0c3e40"/>
<rect x="360" y="394" width="1" height="17" fill="#0f4a4c"/>
<rect x="361" y="394" width="1" height="17" fill="#114f52"/>
<rect x="362" y="394" width="1" height="17" fill="#0f4a4c"/>
<rect x="363" y="394" width="2" height="17" fill="#0d4447"/>
<rect x="365" y="394" width="1" height="17" fill="#0a3436"/>
<rect x="366" y="394" width="2" height="17" fill="#0b393b"/>
<rect x="368" y="394" width="2" height="17" fill="#0a3436"/>
<rect x="370" y="394" width="1" height="17" fill="#0b393b"/>
<rect x="371" y="394" width="1" height="17" fill="#021010"/>
<rect x="372" y="394" width="1" height="17" fill="#0d4447"/>
<rect x="373" y="394" width="2" height="17" fill="#114f52"/>
<rect x="375" y="394" width="1" height="17" fill="#0f4a4c"/>
<rect x="376" y="394" width="3" height="17" fill="#0c3e40"/>
<rect x="379" y="394" width="1" height="17" fill="#0b393b"/>
<rect x="380" y="394" width="1" height="17" fill="#0a3436"/>
<rect x="381" y="394" width="1" height="17" fill="#0b393b"/>
<rect x="382" y="394" width="1" height="17" fill="#021010"/>
<rect x="383" y="394" width="2" height="17" fill="#0d4447"/>
<rect x="385" y="394" width="1" height="17" fill="#114f52"/>
<rect x="386" y="394" width="1" height="17" fill="#0d4447"/>
<rect x="387" y="394" width="1" height="17" fill="#0a3436"/>
<rect x="388" y="394" width="2" height="17" fill="#0b393b"/>
<rect x="390" y="394" width="1" height="17" fill="#0c3e40"/>
<rect x="391" y="394" width="2" height="17" fill="#0a3436"/>
<rect x="393" y="394" width="1" height="17" fill="#021010"/>
<rect x="394" y="394" width="1" height="17" fill="#0f4a4c"/>
<rect x="395" y="394" width="1" height="17" fill="#114f52"/>
<rect x="396" y="394" width="2" height="17" fill="#0d4447"/>
<rect x="398" y="394" width="1" height="17" fill="#0a3436"/>
<rect x="399" y="394" width="1" height="17" fill="#0c3e40"/>
<rect x="400" y="394" width="3" height="17" fill="#0b393b"/>
<rect x="403" y="394" width="1" height="17" fill="#0c3e40"/>
<rect x="404" y="394" width="1" height="17" fill="#0d4447"/>
<rect x="405" y="394" width="1" height="17" fill="#0f4a4c"/>
<rect x="406" y="394" width="1" height="17" fill="#114f52"/>
<rect x="407" y="394" width="1" height="17" fill="#0f4a4c"/>
<rect x="408" y="394" width="1" height="17" fill="#114f52"/>
<rect x="409" y="394" width="3" height="17" fill="#0a3436"/>
<rect x="412" y="394" width="2" height="17" fill="#0b393b"/>
<rect x="414" y="394" width="1" height="17" fill="#0c3e40"/>
<rect x="415" y="394" width="1" height="17" fill="#021010"/>
<rect x="416" y="394" width="1" height="17" fill="#114f52"/>
<rect x="417" y="394" width="2" height="17" fill="#0d4447"/>
<rect x="419" y="394" width="1" height="17" fill="#0f4a4c"/>
<rect x="420" y="394" width="2" height="17" fill="#0c3e40"/>
<rect x="422" y="394" width="2" height="17" fill="#0b393b"/>
<rect x="424" y="394" width="1" height="17" fill="#0a3436"/>
<rect x="425" y="394" width="1" height="17" fill="#0b393b"/>
<rect x="426" y="394" width="2" height="17" fill="#0f4a4c"/>
<rect x="428" y="394" width="1" height="17" fill="#0d4447"/>
<rect x="429" y="394" width="2" height="17" fill="#114f52"/>
<rect x="431" y="394" width="1" height="17" fill="#0b393b"/>
<rect x="432" y="394" width="1" height="17" fill="#0a3436"/>
<rect x="433" y="394" width="2" height="17" fill="#0b393b"/>
<rect x="435" y="394" width="2" height="17" fill="#0c3e40"/>
<rect x="437" y="394" width="1" height="17" fill="#0a3436"/>
<rect x="438" y="394" width="1" height="17" fill="#021010"/>
<rect x="439" y="394" width="2" height="17" fill="#0d4447"/>
<rect x="441" y="394" width="2" height="17" fill="#0f4a4c"/>
<rect x="443" y="394" width="1" height="17" fill="#0c3e40"/>
<rect x="444" y="394" width="1" height="17" fill="#0a3436"/>
<rect x="445" y="394" width="2" height="17" fill="#0c3e40"/>
<rect x="447" y="394" width="2" height="17" fill="#0b393b"/>
<rect x="449" y="394" width="1" height="17" fill="#021010"/>
<rect x="450" y="394" width="2" height="17" fill="#0f4a4c"/>
<rect x="452" y="394" width="2" height="17" fill="#114f52"/>
<rect x="454" y="394" width="1" height="17" fill="#0b393b"/>
<rect x="455" y="394" width="2" height="17" fill="#0a3436"/>
<rect x="457" y="394" width="2" height="17" fill="#0c3e40"/>
<rect x="459" y="394" width="1" height="17" fill="#0b393b"/>
<rect x="460" y="394" width="1" height="17" fill="#0d4447"/>
<rect x="461" y="394" width="1" height="17" fill="#114f52"/>
<rect x="462" y="394" width="1" height="17" fill="#0d4447"/>
<rect x="463" y="394" width="2" height="17" fill="#0f4a4c"/>
<rect x="465" y="394" width="1" height="17" fill="#0c3e40"/>
<rect x="466" y="394" width="1" height="17" fill="#0a3436"/>
<rect x="467" y="394" width="2" height="17" fill="#0b393b"/>
<rect x="469" y="394" width="2" height="17" fill="#0a3436"/>
<rect x="471" y="394" width="1" height="17" fill="#114f52"/>
<rect x="472" y="394" width="1" height="17" fill="#0f4a4c"/>
<rect x="473" y="394" width="1" height="17" fill="#114f52"/>
<rect x="474" y="394" width="1" height="17" fill="#0d4447"/>
<rect x="475" y="394" width="1" height="17" fill="#0f4a4c"/>
<rect x="476" y="394" width="1" height="17" fill="#0a3436"/>
<rect x="477" y="394" width="2" height="17" fill="#0b393b"/>
<rect x="479" y="394" width="2" height="17" fill="#0a3436"/>
<rect x="481" y="394" width="1" height="17" fill="#0b393b"/>
<rect x="482" y="394" width="1" height="17" fill="#021010"/>
<rect x="483" y="394" width="1" height="17" fill="#0d4447"/>
<rect x="484" y="394" width="1" height="17" fill="#114f52"/>
<rect x="485" y="394" width="1" height="17" fill="#0f4a4c"/>
<rect x="486" y="394" width="1" height="17" fill="#114f52"/>
<rect x="487" y="394" width="2" height="17" fill="#0b393b"/>
<rect x="489" y="394" width="2" height="17" fill="#0c3e40"/>
<rect x="491" y="394" width="2" height="17" fill="#0b393b"/>
<rect x="493" y="394" width="1" height="17" fill="#021010"/>
<rect x="494" y="394" width="2" height="17" fill="#0d4447"/>
<rect x="496" y="394" width="2" height="17" fill="#0f4a4c"/>
<rect x="498" y="394" width="1" height="17" fill="#0b393b"/>
<rect x="499" y="394" width="1" height="17" fill="#0c3e40"/>
<rect x="500" y="394" width="1" height="17" fill="#0a3436"/>
<rect x="501" y="394" width="1" height="17" fill="#0c3e40"/>
<rect x="502" y="394" width="2" height="17" fill="#0b393b"/>
<rect x="504" y="394" width="1" height="17" fill="#021010"/>
<rect x="505" y="394" width="2" height="17" fill="#0d4447"/>
<rect x="507" y="394" width="2" height="17" fill="#114f52"/>
<rect x="509" y="394" width="1" height="17" fill="#0c3e40"/>
<rect x="510" y="394" width="1" height="17" fill="#0b393b"/>
<rect x="511" y="394" width="1" height="17" fill="#0a3436"/>
<rect x="512" y="394" width="1" height="17" fill="#0b393b"/>
<rect x="513" y="394" width="2" height="17" fill="#0c3e40"/>
<rect x="515" y="394" width="2" height="17" fill="#0d4447"/>
<rect x="517" y="394" width="3" height="17" fill="#114f52"/>
<rect x="520" y="394" width="3" height="17" fill="#0b393b"/>
<rect x="523" y="394" width="2" height="17" fill="#0c3e40"/>
<rect x="525" y="394" width="1" height="17" fill="#0b393b"/>
<rect x="526" y="394" width="1" height="17" fill="#0d4447"/>
<rect x="527" y="394" width="1" height="17" fill="#114f52"/>
<rect x="528" y="394" width="1" height="17" fill="#0f4a4c"/>
<rect x="529" y="394" width="1" height="17" fill="#114f52"/>
<rect x="530" y="394" width="1" height="17" fill="#0f4a4c"/>
<rect x="531" y="394" width="1" height="17" fill="#0b393b"/>
<rect x="532" y="394" width="1" height="17" fill="#0c3e40"/>
<rect x="533" y="394" width="2" height="17" fill="#0b393b"/>
<rect x="535" y="394" width="1" height="17" fill="#0c3e40"/>
<rect x="536" y="394" width="1" height="17" fill="#0b393b"/>
<rect x="537" y="394" width="1" height="17" fill="#021010"/>
<rect x="538" y="394" width="3" height="17" fill="#114f52"/>
<rect x="541" y="394" width="1" height="17" fill="#0d4447"/>
<rect x="542" y="394" width="2" height="17" fill="#0b393b"/>
<rect x="544" y="394" width="1" height="17" fill="#0c3e40"/>
<rect x="545" y="394" width="1" height="17" fill="#0b393b"/>
<rect x="546" y="394" width="1" height="17" fill="#0c3e40"/>
<rect x="547" y="394" width="2" height="17" fill="#0b393b"/>
<rect x="549" y="394" width="1" height="17" fill="#0f4a4c"/>
<rect x="550" y="394" width="1" height="17" fill="#114f52"/>
<rect x="551" y="394" width="3" height="17" fill="#0d4447"/>
<rect x="554" y="394" width="1" height="17" fill="#0c3e40"/>
<rect x="555" y="394" width="1" height="17" fill="#0a3436"/>
<rect x="556" y="394" width="1" height="17" fill="#0c3e40"/>
<rect x="557" y="394" width="2" height="17" fill="#0a3436"/>
<rect x="559" y="394" width="1" height="17" fill="#0b393b"/>
<rect x="560" y="394" width="2" height="17" fill="#0d4447"/>
<rect x="562" y="394" width="1" height="17" fill="#114f52"/>
<rect x="563" y="394" width="1" height="17" fill="#0f4a4c"/>
<rect x="564" y="394" width="1" height="17" fill="#114f52"/>
<rect x="565" y="394" width="2" height="17" fill="#0c3e40"/>
<rect x="567" y="394" width="1" height="17" fill="#0b393b"/>
<rect x="568" y="394" width="1" height="17" fill="#0a3436"/>
<rect x="569" y="394" width="2" height="17" fill="#0c3e40"/>
<rect x="571" y="394" width="1" height="17" fill="#021010"/>
<rect x="572" y="394" width="2" height="17" fill="#0d4447"/>
<rect x="574" y="394" width="2" height="17" fill="#114f52"/>
<rect x="576" y="394" width="1" height="17" fill="#0c3e40"/>
<rect x="577" y="394" width="1" height="17" fill="#0b393b"/>
<rect x="578" y="394" width="1" height="17" fill="#0c3e40"/>
<rect x="579" y="394" width="3" height="17" fill="#0a3436"/>
<rect x="582" y="394" width="1" height="17" fill="#021010"/>
<rect x="583" y="394" width="2" height="17" fill="#114f52"/>
<rect x="585" y="394" width="2" height="17" fill="#0f4a4c"/>
<rect x="587" y="394" width="1" height="17" fill="#0c3e40"/>
<rect x="588" y="394" width="1" height="17" fill="#0a3436"/>
<rect x="589" y="394" width="2" height="17" fill="#0c3e40"/>
<rect x="591" y="394" width="1" height="17" fill="#0a3436"/>
<rect x="592" y="394" width="1" height="17" fill="#0b393b"/>
<rect x="593" y="394" width="4" height="17" fill="#0f4a4c"/>
<rect x="597" y="394" width="1" height="17" fill="#0d4447"/>
<rect x="598" y="394" width="1" height="17" fill="#0a3436"/>
<rect x="599" y="394" width="1" height="17" fill="#0b393b"/>
<rect x="600" y="394" width="1" height="17" fill="#0a3436"/>
<rect x="601" y="394" width="1" height="17" fill="#0c3e40"/>
<rect x="602" y="394" width="1" height="17" fill="#0a3436"/>
<rect x="603" y="394" width="1" height="17" fill="#0b393b"/>
<rect x="604" y="394" width="1" height="17" fill="#021010"/>
<rect x="605" y="394" width="1" height="17" fill="#0d4447"/>
<rect x="606" y="394" width="2" height="17" fill="#114f52"/>
<rect x="608" y="394" width="1" height="17" fill="#0f4a4c"/>
<rect x="609" y="394" width="1" height="17" fill="#0c3e40"/>
<rect x="610" y="394" width="2" height="17" fill="#0a3436"/>
<rect x="612" y="394" width="1" height="17" fill="#0c3e40"/>
<rect x="613" y="394" width="1" height="17" fill="#0b393b"/>
<rect x="614" y="394" width="1" height="17" fill="#0a3436"/>
<rect x="615" y="394" width="1" height="17" fill="#021010"/>
<rect x="616" y="394" width="2" height="17" fill="#0d4447"/>
<rect x="618" y="394" width="1" height="17" fill="#0f4a4c"/>
<rect x="619" y="394" width="1" height="17" fill="#114f52"/>
<rect x="620" y="394" width="1" height="17" fill="#0c3e40"/>
<rect x="621" y="394" width="1" height="17" fill="#0b393b"/>
<rect x="622" y="394" width="1" height="17" fill="#0a3436"/>
<rect x="623" y="394" width="2" height="17" fill="#0c3e40"/>
<rect x="625" y="394" width="1" height="17" fill="#0b393b"/>
<rect x="626" y="394" width="1" height="17" fill="#021010"/>
<rect x="627" y="394" width="2" height="17" fill="#114f52"/>
<rect x="629" y="394" width="1" height="17" fill="#0d4447"/>
<rect x="630" y="394" width="1" height="17" fill="#114f52"/>
<rect x="631" y="394" width="2" height="17" fill="#0b393b"/>
<rect x="633" y="394" width="1" height="17" fill="#0a3436"/>
<rect x="634" y="394" width="2" height="17" fill="#0b393b"/>
<rect x="636" y="394" width="1" height="17" fill="#0c3e40"/>
<rect x="637" y="394" width="2" height="17" fill="#0d4447"/>
<rect x="639" y="394" width="2" height="17" fill="#0f4a4c"/>
<rect x="641" y="394" width="1" height="17" fill="#114f52"/>
<rect x="642" y="394" width="1" height="17" fill="#0b393b"/>
<rect x="643" y="394" width="1" height="17" fill="#0c3e40"/>
<rect x="644" y="394" width="1" height="17" fill="#0b393b"/>
<rect x="645" y="394" width="2" height="17" fill="#0a3436"/>
<rect x="647" y="394" width="1" height="17" fill="#0c3e40"/>
<rect x="648" y="394" width="1" height="17" fill="#021010"/>
<rect x="649" y="394" width="1" height="17" fill="#114f52"/>
<rect x="650" y="394" width="1" height="17" fill="#0f4a4c"/>
<rect x="651" y="394" width="1" height="17" fill="#0d4447"/>
<rect x="652" y="394" width="1" height="17" fill="#0f4a4c"/>
<rect x="653" y="394" width="1" height="17" fill="#0b393b"/>
<rect x="654" y="394" width="3" height="17" fill="#0c3e40"/>
<rect x="657" y="394" width="1" height="17" fill="#0a3436"/>
<rect x="658" y="394" width="1" height="17" fill="#0b393b"/>
<rect x="659" y="394" width="1" height="17" fill="#0c3e40"/>
</g>
<rect x="315" y="412" width="346" height="4" fill="#176464"/>
<g shape-rendering="geometricPrecision">
<rect x="23" y="411" width="956" height="1" fill="#2ec4cc" shape-rendering="crispEdges"/><rect x="23" y="412" width="956" height="1" fill="#0c3030" shape-rendering="crispEdges"/><line x1="23" y1="413.5" x2="314" y2="413.5" stroke="#454545" stroke-width="1" stroke-dasharray="3,2.56" shape-rendering="crispEdges"/><line x1="662" y1="413.5" x2="979" y2="413.5" stroke="#454545" stroke-width="1" stroke-dasharray="3,2.56" shape-rendering="crispEdges"/>
<path d="M282.6,412 L283.6,406 L284.6,412 Z" fill="#2ec4cc"/>
<path d="M314.3,412 L315,430 L315.8,412 Z" fill="#2ec4cc"/>
</g>
<path d="M5.5,406.5 H16.5 L23,413 L16.5,420 H5.5 Q4.5,420 4.5,419 V407.5 Q4.5,406.5 5.5,406.5 Z" fill="#071818" stroke="#22a8b0" stroke-width="0.9" shape-rendering="geometricPrecision"/>
<text x="13.8" y="416" font-size="7.5" fill="#2ab8c0" text-anchor="middle" letter-spacing="1" font-family="Liberation Sans">C2</text>
<line x1="627.5" y1="51" x2="627.5" y2="558" stroke="#7a7a7e" stroke-width="1" stroke-dasharray="3,2.5"/>
<path d="M315.0,216 L315.6,274 L316.2,216 Z" fill="#e6de20" shape-rendering="geometricPrecision"/>
<path d="M315.1,412 L315.6,430 L316.1,412 Z" fill="#2ec4cc" shape-rendering="geometricPrecision"/>
<line x1="315" y1="57.5" x2="660" y2="57.5" stroke="#a80404" stroke-width="1" stroke-dasharray="8,3.62" stroke-dashoffset="4.8"/>
<g stroke="#a8a8a8" fill="none" stroke-width="1" shape-rendering="geometricPrecision"><circle cx="314.5" cy="215.5" r="2.6"/><line x1="307.5" y1="208.5" x2="310.5" y2="211.5"/><line x1="321.5" y1="208.5" x2="318.5" y2="211.5"/><line x1="307.5" y1="222.5" x2="310.5" y2="219.5"/><line x1="321.5" y1="222.5" x2="318.5" y2="219.5"/></g>
<g stroke="#a8a8a8" fill="none" stroke-width="1" shape-rendering="geometricPrecision"><circle cx="660.5" cy="215.5" r="2.6"/><line x1="653.5" y1="208.5" x2="656.5" y2="211.5"/><line x1="667.5" y1="208.5" x2="664.5" y2="211.5"/><line x1="653.5" y1="222.5" x2="656.5" y2="219.5"/><line x1="667.5" y1="222.5" x2="664.5" y2="219.5"/></g>
<g shape-rendering="geometricPrecision"><path d="M621.5,30.5 H633.5 L627.5,35.5 Z" fill="#e8821e"/><path d="M622,36.5 H633 V47 H629.5 L627.5,50.5 L625.5,47 H622 Z" fill="#000" stroke="#e8821e" stroke-width="1.2"/></g>
<text x="627.5" y="45" font-size="8" fill="#e8821e" text-anchor="middle" font-family="Liberation Sans">T</text>
<g shape-rendering="geometricPrecision">
<rect x="316" y="32" width="12" height="12" rx="2" fill="#3a3a3a"/><circle cx="321.6" cy="38.2" r="4.8" fill="#3a8ee0"/>
<rect x="647" y="32" width="13" height="12" rx="2" fill="#3a3a3a"/><circle cx="652.5" cy="38.2" r="4.8" fill="#3a8ee0"/>
<rect x="301.3" y="32.5" width="14.4" height="11.4" rx="2.2" fill="#dcd430"/>
<rect x="659.3" y="32.5" width="14.4" height="11.4" rx="2.2" fill="#dcd430"/>
</g>
<text x="321.7" y="40.9" font-size="8" fill="#e8f0ff" text-anchor="middle" font-family="Liberation Sans">A</text>
<text x="652.6" y="40.9" font-size="8" fill="#e8f0ff" text-anchor="middle" font-family="Liberation Sans">B</text>
<text x="308.3" y="40.9" font-size="9" fill="#1a1a10" text-anchor="middle" font-family="Liberation Sans">C1</text>
<text x="666.3" y="40.9" font-size="9" fill="#1a1a10" text-anchor="middle" font-family="Liberation Sans">C1</text>
<path d="M955.5,33.5 H976 V53.5 Z" fill="#585858" shape-rendering="geometricPrecision"/>
<g stroke="#d0d0d0" stroke-width="1.3" fill="none" shape-rendering="geometricPrecision"><circle cx="972" cy="37.5" r="2.3"/><line x1="970.3" y1="39.3" x2="966" y2="43.5"/></g>
</svg>
<div class="ro" style="left:235px;top:46px;width:79px;height:23px;padding:2px 0 0 2px">t: -3.207 s<br>v: 944.774 µV</div>
<div class="ro" style="left:660px;top:46px;width:78px;height:22px;padding:2px 0 0 2px">t: 329.154 ms<br>v: 1.760 mV</div>
<div class="ro" style="left:397px;top:46px;width:180px;height:25px;padding:2px 0 0 2px;background:rgba(64,64,64,0.88)"><span class="a" style="left:2px;top:3.5px">Δt: 3.536 s</span><span class="a" style="left:71px;top:3.5px">1/Δt:&nbsp; 282.82 mHz</span><span class="a" style="left:2px;top:13.5px">Δv: 814.952 µV</span><span class="a" style="left:72px;top:13.5px">Δv/Δt:&nbsp; 230.48 µV/s</span></div>
<div class="a" style="left:989px;top:14px;width:90px;height:546px;border:1px solid #48474a;border-right-color:#3a3a3a;background:#2e2e2e"></div>
<div class="a" style="left:989px;top:14px;width:90px;text-align:center;color:#e6e6e6;font-size:9px;font-weight:bold;line-height:13px">Add New...</div>
<div class="btn" style="left:993px;top:30px;width:36px;height:21px;line-height:19px">Cursors</div>
<div class="btn" style="left:1033px;top:30px;width:36px;height:21px;line-height:19px">Note</div>
<div class="btn" style="left:993px;top:55px;width:36px;height:21px;line-height:19px">Measure</div>
<div class="btn" style="left:1033px;top:55px;width:36px;height:21px;line-height:19px">Search</div>
<div class="btn" style="left:1033px;top:80px;width:36px;height:21px;line-height:19px">Plot</div>
<div class="btn" style="left:993px;top:80px;width:36px;height:21px;line-height:9px;padding-top:1px">Results<br>Table</div>
<div class="a" style="left:992px;top:106px;width:81px;height:1px;background:#4a4541"></div>
<div class="a" style="left:992px;top:531px;width:81px;height:1px;background:#4a4541"></div>
<div class="btn" style="left:993px;top:536px;width:36px;height:21px"></div>
<svg class="a" style="left:993px;top:536px" width="36" height="21" viewBox="0 0 36 21"><g fill="none" stroke="#c0c0c0" stroke-width="0.9"><path d="M11,3.5 H19 M11.5,3.5 V11.5 H15" stroke-dasharray="1.2,1.2"/><circle cx="18.4" cy="10.8" r="2.6" stroke-width="1.1"/><line x1="20.3" y1="12.8" x2="23.8" y2="16.3" stroke-width="1.6"/></g></svg>
<svg class="a" style="left:1047px;top:536px" width="18" height="20" viewBox="0 0 18 20"><g fill="none" stroke="#cfcfcf" stroke-width="1"><ellipse cx="9" cy="3.5" rx="7" ry="2"/><path d="M2.2,4 L4,18 Q9,20 14,18 L15.8,4"/><path d="M6,7 V17 M9,7 V18 M12,7 V17"/></g></svg>
<svg class="a" style="left:982px;top:280px" width="6" height="16"><g fill="#d0d0d0"><circle cx="3.5" cy="2.2" r="1.25"/><circle cx="3.5" cy="7.2" r="1.25"/><circle cx="3.5" cy="12.1" r="1.25"/></g></svg>
<div class="box" style="left:2px;top:562px;width:50px;height:45px;border-radius:3px"><div class="hdr" style="background:#f8ec30;color:#202000;height:10px">Ch 1</div><div class="bt" style="left:3px;top:12px">100 mV/div</div><div class="bt" style="left:3px;top:23.5px">1 MΩ</div><div class="bt" style="left:3px;top:33px">20 kHz</div><div class="bt" style="left:41px;top:31px;font-size:6px">B<sub style="font-size:4px">w</sub></div></div>
<div class="box" style="left:55px;top:562px;width:50px;height:45px;border-radius:3px"><div class="hdr" style="background:#1f4848;color:#30c0c8;height:10px">Ch 2</div><div class="bt" style="left:3px;top:12px">100 mV/div</div><div class="bt" style="left:3px;top:23.5px">1 MΩ</div><div class="bt" style="left:3px;top:33px">20 kHz</div><div class="bt" style="left:41px;top:31px;font-size:6px">B<sub style="font-size:4px">w</sub></div></div>
<div class="btn" style="left:574px;top:562px;width:23px;height:45px;font-size:11px;line-height:43px;border-radius:4px">3<div class="a" style="left:3px;top:2.7px;width:16px;height:2px;background:#c83848;opacity:0.85"></div></div>
<div class="btn" style="left:599.5px;top:562px;width:23px;height:45px;font-size:11px;line-height:43px;border-radius:4px">4<div class="a" style="left:3px;top:2.7px;width:16px;height:2px;background:#70b030;opacity:0.85"></div></div>
<div class="a" style="left:627.5px;top:563px;width:1px;height:43px;background:#3e3e3e"></div>
<div class="btn" style="left:634px;top:562px;width:23px;height:45px;font-size:9px;line-height:9px;padding-top:9px;border-radius:4px">Add<br>New<br>Math<div class="a" style="left:3px;top:2.7px;width:16px;height:2px;background:#d08020;opacity:0.85"></div></div>
<div class="btn" style="left:659px;top:562px;width:23px;height:45px;font-size:9px;line-height:9px;padding-top:9px;border-radius:4px">Add<br>New<br>Ref<div class="a" style="left:3px;top:2.7px;width:16px;height:2px;background:#909090;opacity:0.85"></div></div>
<div class="btn" style="left:684px;top:562px;width:23px;height:45px;font-size:9px;line-height:9px;padding-top:9px;border-radius:4px">Add<br>New<br>Bus<div class="a" style="left:3px;top:2.7px;width:16px;height:2px;background:#a040c0;opacity:0.85"></div></div>
<div class="a" style="left:713px;top:563px;width:1px;height:43px;background:#3e3e3e"></div>
<div class="box" style="left:719px;top:562px;width:114px;height:45px;border-radius:3px"><div class="hdr">Horizontal</div><div class="bt" style="left:4px;top:12.5px;font-size:8.5px">1 s/div</div><div class="bt" style="left:64px;top:12.5px;font-size:8.5px">10 s</div><div class="bt" style="left:4px;top:23px;font-size:8.5px">SR: 100 kS/s</div><div class="bt" style="left:64px;top:23px;font-size:8.5px">10 µs/pt</div><div class="bt" style="left:4px;top:33.5px;font-size:8.5px">RL: 1 Mpts</div><div class="bt" style="left:71px;top:33.5px;font-size:8.5px">64%</div><svg class="a" style="left:63.3px;top:35.3px" width="7" height="7"><path d="M0.5,0.5 H6 V5 L3.25,6.8 L0.5,5 Z" fill="#e8821e"/><rect x="1.8" y="1.6" width="3" height="3" fill="#2a1a08"/><rect x="2.8" y="2.2" width="1" height="2" fill="#e0c0a0"/></svg></div>
<div class="box" style="left:839px;top:562px;width:90px;height:45px;border-radius:3px"><div class="hdr">Trigger</div><div class="a" style="left:3.5px;top:13px;width:17px;height:10px;background:#f6ec28;border:1px solid #45451a;border-radius:3.5px;font-size:8.5px;line-height:8px;text-align:center;color:#101000">1</div><svg class="a" style="left:26px;top:12.5px" width="10" height="10"><path d="M0,8.3 H2.4 L7,3 H9" fill="none" stroke="#6060a8" stroke-width="0.9"/></svg><div class="bt" style="left:41px;top:12.5px">0 V</div></div>
<div class="box" style="left:934px;top:562px;width:85px;height:45px;border-radius:3px"><div class="hdr">Acquisition</div><div class="bt" style="left:4px;top:12.5px;font-size:8.5px">Auto,</div><div class="bt" style="left:37px;top:12.5px;font-size:8.5px">Analyze</div><div class="bt" style="left:4px;top:23px;font-size:8.5px">High Res: 16 bits</div><div class="bt" style="left:4px;top:33.5px;font-size:8.5px">1 Acqs</div></div>
<div class="a" style="left:1025px;top:562px;width:50px;height:20px;background:#ee1c25;border-radius:3px;color:#fff;font-size:8.3px;font-weight:normal;-webkit-text-stroke:0.25px #fff;text-align:center;line-height:19.5px;letter-spacing:-0.1px">Stopped</div>
<div class="a" style="left:1024px;top:586px;width:51px;height:22px;background:#d2d2d2;border-radius:2px;color:#1a1a1a;font-size:9px;line-height:10px;text-align:center;padding-top:1px">16 Apr 2025<br>11:29:33 PM</div>
</body></html>
